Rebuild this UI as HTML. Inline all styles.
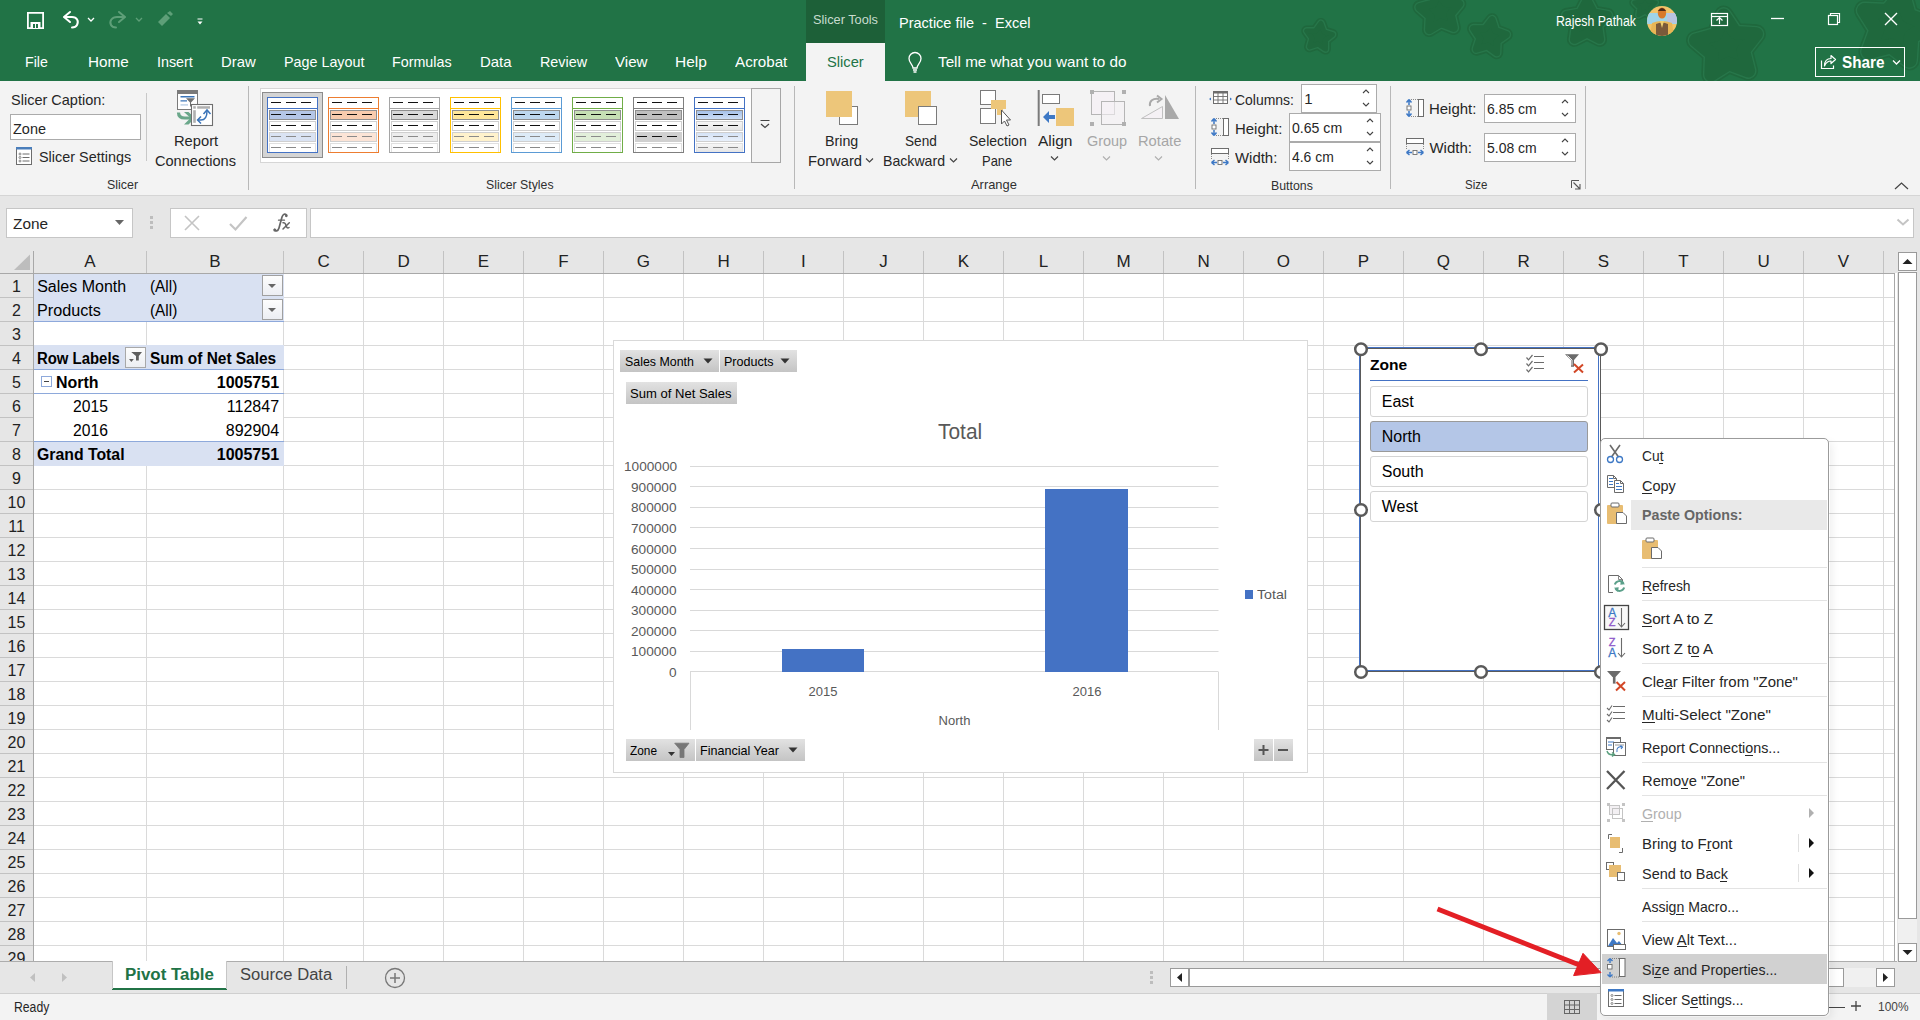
<!DOCTYPE html>
<html><head><meta charset="utf-8"><title>Excel</title>
<style>
html,body{margin:0;padding:0;}
body{width:1920px;height:1020px;position:relative;overflow:hidden;background:#fff;font-family:"Liberation Sans",sans-serif;}
.t{position:absolute;white-space:nowrap;line-height:1;transform-origin:0 0;}
svg{overflow:visible}
</style></head><body>
<div style="position:absolute;left:0px;top:0px;width:1920px;height:81px;background:#217346"></div>
<svg style="position:absolute;left:0px;top:0px;overflow:hidden" width="1920" height="81" viewBox="0 0 1920 81"><path d="M1320.9,23.5 L1323.9,31.9 L1332.4,34.6 L1325.4,40.1 L1325.4,49.0 L1318.0,44.0 L1309.6,46.8 L1312.0,38.2 L1306.8,31.0 L1315.7,30.8Z" fill="#1f683d" stroke="#1f683d" stroke-width="11.1" stroke-linejoin="round"/><path d="M1320.9,23.5 L1323.9,31.9 L1332.4,34.6 L1325.4,40.1 L1325.4,49.0 L1318.0,44.0 L1309.6,46.8 L1312.0,38.2 L1306.8,31.0 L1315.7,30.8Z" fill="#27764a" stroke="#27764a" stroke-width="7.9" stroke-linejoin="round"/><path d="M1320.9,23.5 L1323.9,31.9 L1332.4,34.6 L1325.4,40.1 L1325.4,49.0 L1318.0,44.0 L1309.6,46.8 L1312.0,38.2 L1306.8,31.0 L1315.7,30.8Z" fill="#1f683d" stroke="#1f683d" stroke-width="5.1" stroke-linejoin="round"/><path d="M1438.2,-8.7 L1445.6,2.7 L1459.1,3.9 L1450.5,14.4 L1453.6,27.7 L1440.9,22.8 L1429.3,29.8 L1430.0,16.2 L1419.7,7.3 L1432.9,3.8Z" fill="#1f683d" stroke="#1f683d" stroke-width="14.4" stroke-linejoin="round"/><path d="M1438.2,-8.7 L1445.6,2.7 L1459.1,3.9 L1450.5,14.4 L1453.6,27.7 L1440.9,22.8 L1429.3,29.8 L1430.0,16.2 L1419.7,7.3 L1432.9,3.8Z" fill="#27764a" stroke="#27764a" stroke-width="11.2" stroke-linejoin="round"/><path d="M1438.2,-8.7 L1445.6,2.7 L1459.1,3.9 L1450.5,14.4 L1453.6,27.7 L1440.9,22.8 L1429.3,29.8 L1430.0,16.2 L1419.7,7.3 L1432.9,3.8Z" fill="#1f683d" stroke="#1f683d" stroke-width="8.4" stroke-linejoin="round"/><path d="M1492.1,19.7 L1495.6,30.6 L1506.4,34.6 L1497.1,41.3 L1496.7,52.8 L1487.4,46.0 L1476.3,49.2 L1479.9,38.3 L1473.5,28.7 L1485.0,28.8Z" fill="#1f683d" stroke="#1f683d" stroke-width="12.9" stroke-linejoin="round"/><path d="M1492.1,19.7 L1495.6,30.6 L1506.4,34.6 L1497.1,41.3 L1496.7,52.8 L1487.4,46.0 L1476.3,49.2 L1479.9,38.3 L1473.5,28.7 L1485.0,28.8Z" fill="#27764a" stroke="#27764a" stroke-width="9.7" stroke-linejoin="round"/><path d="M1492.1,19.7 L1495.6,30.6 L1506.4,34.6 L1497.1,41.3 L1496.7,52.8 L1487.4,46.0 L1476.3,49.2 L1479.9,38.3 L1473.5,28.7 L1485.0,28.8Z" fill="#1f683d" stroke="#1f683d" stroke-width="6.9" stroke-linejoin="round"/><path d="M1587.0,0.4 L1593.6,12.9 L1607.5,15.3 L1597.7,25.5 L1599.7,39.5 L1587.0,33.2 L1574.3,39.5 L1576.3,25.5 L1566.5,15.3 L1580.4,12.9Z" fill="#1f683d" stroke="#1f683d" stroke-width="14.7" stroke-linejoin="round"/><path d="M1587.0,0.4 L1593.6,12.9 L1607.5,15.3 L1597.7,25.5 L1599.7,39.5 L1587.0,33.2 L1574.3,39.5 L1576.3,25.5 L1566.5,15.3 L1580.4,12.9Z" fill="#27764a" stroke="#27764a" stroke-width="11.5" stroke-linejoin="round"/><path d="M1587.0,0.4 L1593.6,12.9 L1607.5,15.3 L1597.7,25.5 L1599.7,39.5 L1587.0,33.2 L1574.3,39.5 L1576.3,25.5 L1566.5,15.3 L1580.4,12.9Z" fill="#1f683d" stroke="#1f683d" stroke-width="8.7" stroke-linejoin="round"/><path d="M1645.0,-5.2 L1648.4,1.3 L1655.7,2.5 L1650.5,7.8 L1651.6,15.1 L1645.0,11.8 L1638.4,15.1 L1639.5,7.8 L1634.3,2.5 L1641.6,1.3Z" fill="#1f683d" stroke="#1f683d" stroke-width="10.0" stroke-linejoin="round"/><path d="M1645.0,-5.2 L1648.4,1.3 L1655.7,2.5 L1650.5,7.8 L1651.6,15.1 L1645.0,11.8 L1638.4,15.1 L1639.5,7.8 L1634.3,2.5 L1641.6,1.3Z" fill="#27764a" stroke="#27764a" stroke-width="6.8" stroke-linejoin="round"/><path d="M1645.0,-5.2 L1648.4,1.3 L1655.7,2.5 L1650.5,7.8 L1651.6,15.1 L1645.0,11.8 L1638.4,15.1 L1639.5,7.8 L1634.3,2.5 L1641.6,1.3Z" fill="#1f683d" stroke="#1f683d" stroke-width="4.0" stroke-linejoin="round"/><path d="M1723.7,15.2 L1735.3,32.6 L1756.2,34.0 L1743.3,50.5 L1748.4,70.8 L1728.7,63.5 L1711.0,74.7 L1711.8,53.8 L1695.7,40.3 L1715.9,34.6Z" fill="#1f683d" stroke="#1f683d" stroke-width="19.4" stroke-linejoin="round"/><path d="M1723.7,15.2 L1735.3,32.6 L1756.2,34.0 L1743.3,50.5 L1748.4,70.8 L1728.7,63.5 L1711.0,74.7 L1711.8,53.8 L1695.7,40.3 L1715.9,34.6Z" fill="#27764a" stroke="#27764a" stroke-width="16.2" stroke-linejoin="round"/><path d="M1723.7,15.2 L1735.3,32.6 L1756.2,34.0 L1743.3,50.5 L1748.4,70.8 L1728.7,63.5 L1711.0,74.7 L1711.8,53.8 L1695.7,40.3 L1715.9,34.6Z" fill="#1f683d" stroke="#1f683d" stroke-width="13.4" stroke-linejoin="round"/><path d="M1902.3,-6.4 L1908.6,15.8 L1930.0,24.3 L1910.9,37.2 L1909.3,60.2 L1891.2,45.9 L1868.8,51.6 L1876.8,29.9 L1864.5,10.4 L1887.6,11.3Z" fill="#1f683d" stroke="#1f683d" stroke-width="20.8" stroke-linejoin="round"/><path d="M1902.3,-6.4 L1908.6,15.8 L1930.0,24.3 L1910.9,37.2 L1909.3,60.2 L1891.2,45.9 L1868.8,51.6 L1876.8,29.9 L1864.5,10.4 L1887.6,11.3Z" fill="#27764a" stroke="#27764a" stroke-width="17.6" stroke-linejoin="round"/><path d="M1902.3,-6.4 L1908.6,15.8 L1930.0,24.3 L1910.9,37.2 L1909.3,60.2 L1891.2,45.9 L1868.8,51.6 L1876.8,29.9 L1864.5,10.4 L1887.6,11.3Z" fill="#1f683d" stroke="#1f683d" stroke-width="14.8" stroke-linejoin="round"/></svg>
<div style="position:absolute;left:806px;top:0px;width:79px;height:43px;background:#1d6038"></div>
<div style="position:absolute;left:806px;top:43px;width:79px;height:38px;background:#f3f3f3"></div>
<div class="t" style="left:813.00px;top:13.20px;font-size:13px;color:#c8dccf;transform:scaleX(0.9814);">Slicer Tools</div>
<div class="t" style="left:898.50px;top:14.50px;font-size:15px;color:#ffffff;transform:scaleX(0.9676);">Practice file  -  Excel</div>
<svg style="position:absolute;left:0px;top:0px;" width="260" height="40" viewBox="0 0 260 40"><path d="M27.9,12.9 h15.2 v15.2 h-15.2 z" fill="none" stroke="#fff" stroke-width="1.8"/><rect x="30.5" y="22" width="10" height="6" fill="#fff"/><rect x="33" y="24" width="2" height="4" fill="#217346"/><rect x="36" y="24" width="2" height="4" fill="#217346"/><path d="M64,17 L70,12 M64,17 L70,22 M64,17 H72 C77,17 79,21 77,25 C76,27 74,27.5 72,27.5" fill="none" stroke="#fff" stroke-width="2" stroke-linecap="round"/><path d="M88,18 L91,21 L94,18" fill="none" stroke="#fff" stroke-width="1.3"/><g opacity="0.45"><path d="M125,17 L119,12 M125,17 L119,22 M125,17 H117 C112,17 109,21 111,25 C112,27 114,27.5 116,27.5" fill="none" stroke="#a8d5b5" stroke-width="2" stroke-linecap="round"/><path d="M136,18 L139,21 L142,18" fill="none" stroke="#a8d5b5" stroke-width="1.3"/><path d="M158,22 L166,14 L170,18 L162,26 Z M167,13 L170,11 L173,14 L171,16 Z" fill="#a8d5b5"/></g><path d="M197.5,19 h5" stroke="#fff" stroke-width="1"/><path d="M197.5,21.5 L200,24.5 L202.5,21.5 Z" fill="#fff"/></svg>
<div class="t" style="left:25.20px;top:54.30px;font-size:15px;color:#ffffff;transform:scaleX(0.9441);">File</div>
<div class="t" style="left:88.00px;top:54.30px;font-size:15px;color:#ffffff;transform:scaleX(1.0162);">Home</div>
<div class="t" style="left:157.00px;top:54.30px;font-size:15px;color:#ffffff;transform:scaleX(0.9547);">Insert</div>
<div class="t" style="left:221.30px;top:54.30px;font-size:15px;color:#ffffff;transform:scaleX(0.9907);">Draw</div>
<div class="t" style="left:283.90px;top:54.30px;font-size:15px;color:#ffffff;transform:scaleX(0.9546);">Page Layout</div>
<div class="t" style="left:392.20px;top:54.30px;font-size:15px;color:#ffffff;transform:scaleX(0.9528);">Formulas</div>
<div class="t" style="left:480.00px;top:54.30px;font-size:15px;color:#ffffff;transform:scaleX(0.9961);">Data</div>
<div class="t" style="left:539.80px;top:54.30px;font-size:15px;color:#ffffff;transform:scaleX(0.9573);">Review</div>
<div class="t" style="left:614.80px;top:54.30px;font-size:15px;color:#ffffff;transform:scaleX(1.0078);">View</div>
<div class="t" style="left:674.80px;top:54.30px;font-size:15px;color:#ffffff;transform:scaleX(1.0316);">Help</div>
<div class="t" style="left:735.20px;top:54.30px;font-size:15px;color:#ffffff;transform:scaleX(1.0121);">Acrobat</div>
<div class="t" style="left:826.60px;top:54.30px;font-size:15px;color:#217346;transform:scaleX(0.9787);">Slicer</div>
<svg style="position:absolute;left:900px;top:48px;" width="30" height="30" viewBox="0 0 30 30"><path d="M13,20 C13,17 9,15 9,10.5 A6,6 0 0 1 21,10.5 C21,15 17,17 17,20 Z" fill="none" stroke="#fff" stroke-width="1.3"/><path d="M13,22 h4 M13.5,24 h3" stroke="#fff" stroke-width="1.3"/></svg>
<div class="t" style="left:937.60px;top:54.30px;font-size:15px;color:#ffffff;transform:scaleX(1.0178);">Tell me what you want to do</div>
<div class="t" style="left:1556.00px;top:14.15px;font-size:14px;color:#ffffff;transform:scaleX(0.8778);">Rajesh Pathak</div>
<svg style="position:absolute;left:1647px;top:6px;" width="30" height="30" viewBox="0 0 30 30"><defs><clipPath id="av"><circle cx="15" cy="15" r="15"/></clipPath></defs><g clip-path="url(#av)"><rect width="30" height="30" fill="#f2c46a"/><rect x="0" y="7" width="30" height="11" fill="#9fd3e8"/><rect x="20" y="7" width="10" height="10" fill="#b9c3e0"/><path d="M3,30 L5,17 Q15,13 25,17 L27,30 Z" fill="#e8b655"/><path d="M9,30 L9,18 Q15,15 21,18 L21,30 Z" fill="#7a5a3a"/><path d="M13,15 L15,22 L17,15 Z" fill="#f0d070"/><ellipse cx="15" cy="7" rx="4.2" ry="5.5" fill="#d8782a"/><path d="M10.8,5 Q15,-1 19.2,5" fill="#4a2a1a"/></g></svg>
<svg style="position:absolute;left:0px;top:0px;" width="1920" height="40" viewBox="0 0 1920 40"><rect x="1711.5" y="13.5" width="16" height="12" fill="none" stroke="#fff" stroke-width="1.2"/><path d="M1712,16.5 h15" stroke="#fff" stroke-width="1.2"/><path d="M1719.5,24 v-6 M1716.5,20.5 L1719.5,17.5 L1722.5,20.5" fill="none" stroke="#fff" stroke-width="1.2"/><path d="M1771,18.5 h13" stroke="#fff" stroke-width="1.3"/><rect x="1828.5" y="15.5" width="9" height="9" fill="none" stroke="#fff" stroke-width="1.2"/><path d="M1830.5,15.5 v-2 h9 v9 h-2" fill="none" stroke="#fff" stroke-width="1.2"/><path d="M1885,13 L1897,25 M1897,13 L1885,25" stroke="#fff" stroke-width="1.4"/></svg>
<div style="position:absolute;left:1815px;top:47px;width:90px;height:30px;box-sizing:border-box;border:1px solid #fff;"></div>
<svg style="position:absolute;left:1818px;top:51px;" width="22" height="20" viewBox="0 0 22 20"><path d="M3.5,9.5 v8 h12 v-3" fill="none" stroke="#fff" stroke-width="1.2"/><path d="M6.5,15 C6.5,10 9,7.5 13,7.5 V4.5 L17.5,8.5 L13,12.5 V10 C10,10 8,11.5 6.5,15 Z" fill="none" stroke="#fff" stroke-width="1.2" stroke-linejoin="round"/></svg>
<div class="t" style="left:1841.50px;top:54.76px;font-size:16px;color:#ffffff;font-weight:bold;transform:scaleX(0.9555);">Share</div>
<svg style="position:absolute;left:1892px;top:59px;" width="10" height="8" viewBox="0 0 10 8"><path d="M1,1.5 L4.5,5 L8,1.5" fill="none" stroke="#fff" stroke-width="1.3"/></svg>
<div style="position:absolute;left:0px;top:81px;width:1920px;height:114px;background:#f3f3f3"></div>
<div style="position:absolute;left:0px;top:195px;width:1920px;height:1px;background:#d5d5d5"></div>
<div style="position:absolute;left:146px;top:93px;width:1px;height:68px;background:#c8c8c8"></div>
<div style="position:absolute;left:248px;top:86px;width:1px;height:104px;background:#b8b8b8"></div>
<div style="position:absolute;left:794px;top:86px;width:1px;height:103px;background:#b8b8b8"></div>
<div style="position:absolute;left:1195px;top:86px;width:1px;height:103px;background:#b8b8b8"></div>
<div style="position:absolute;left:1390px;top:86px;width:1px;height:103px;background:#b8b8b8"></div>
<div style="position:absolute;left:1585px;top:86px;width:1px;height:103px;background:#b8b8b8"></div>
<div class="t" style="left:10.60px;top:91.70px;font-size:15px;color:#262626;transform:scaleX(0.9675);">Slicer Caption:</div>
<div style="position:absolute;left:10px;top:114px;width:131px;height:26px;box-sizing:border-box;border:1px solid #ababab;background:#fff"></div>
<div class="t" style="left:13.00px;top:120.80px;font-size:15px;color:#262626;transform:scaleX(0.9649);">Zone</div>
<svg style="position:absolute;left:15px;top:146px;" width="18" height="20" viewBox="0 0 18 20"><rect x="1.5" y="1.5" width="15" height="17" fill="#fff" stroke="#6d6d6d"/><rect x="1" y="1" width="16" height="2.5" fill="#4a7ebb"/><circle cx="5" cy="8" r="1" fill="none" stroke="#6d6d6d" stroke-width="0.8"/><circle cx="5" cy="11.5" r="1" fill="none" stroke="#6d6d6d" stroke-width="0.8"/><circle cx="5" cy="15" r="1" fill="none" stroke="#6d6d6d" stroke-width="0.8"/><path d="M7.5,8 h7 M7.5,11.5 h7 M7.5,15 h7" stroke="#6d6d6d" stroke-width="1"/></svg>
<div class="t" style="left:38.60px;top:149.30px;font-size:15px;color:#262626;transform:scaleX(0.9609);">Slicer Settings</div>
<svg style="position:absolute;left:170px;top:85px;" width="50" height="45" viewBox="0 0 50 45"><rect x="7.5" y="5.5" width="20" height="19" fill="#fff" stroke="#7a7a7a"/><rect x="7" y="5" width="21" height="4" fill="#7a7a7a"/>
<path d="M10.5,11.7 h14 M10.5,15.9 h6.5" stroke="#3a74b8" stroke-width="1.4"/><path d="M10.5,19.9 h7.5" stroke="#b9cfe6" stroke-width="1.4"/><path d="M16,13.2 h9 l-4,4.4 v3.8 h-1 v-3.8 z" fill="#707070"/>
<path d="M8.5,27.5 C8.5,31.5 11,33 15,33 H21" fill="none" stroke="#6aa78a" stroke-width="3.2"/><path d="M14,27 L18.5,27 L25,33 L18.5,39.5 L14,39.5 L20.5,33 Z" fill="#6aa78a"/><rect x="21.5" y="19.5" width="21" height="21" fill="#fff" stroke="#6f6f6f" stroke-width="1.1"/><rect x="23.2" y="21.2" width="2.6" height="2.5" fill="#b0b0b0"/><rect x="27.2" y="21.2" width="12.8" height="2.5" fill="#b0b0b0"/><rect x="23.2" y="25.2" width="2.6" height="12.6" fill="#b0b0b0"/>
<path d="M27.6,35 H31 C35,35 37,32 37,26" fill="none" stroke="#3a74b8" stroke-width="1.5"/><path d="M33.5,29 L37,25 L40.5,29" fill="none" stroke="#3a74b8" stroke-width="1.5"/><path d="M31,31.5 L27.6,35 L31,38.5" fill="none" stroke="#3a74b8" stroke-width="1.5"/>
</svg>
<div class="t" style="left:173.60px;top:133.30px;font-size:15px;color:#262626;transform:scaleX(0.9800);">Report</div>
<div class="t" style="left:155.00px;top:153.30px;font-size:15px;color:#262626;transform:scaleX(0.9712);">Connections</div>
<div class="t" style="left:107.00px;top:178.27px;font-size:13.5px;color:#303030;transform:scaleX(0.9185);">Slicer</div>
<div style="position:absolute;left:260px;top:88px;width:521px;height:75px;box-sizing:border-box;border:1px solid #d6d6d6;background:#fff"></div>
<div style="position:absolute;left:751px;top:88px;width:30px;height:75px;box-sizing:border-box;border:1px solid #a6a6a6;background:#f3f3f3"></div>
<svg style="position:absolute;left:759px;top:118px;" width="14" height="12" viewBox="0 0 14 12"><path d="M1.5,2.5 h9" stroke="#444" stroke-width="1"/><path d="M2,6 L6,9.5 L10,6" fill="none" stroke="#444" stroke-width="1.2"/></svg>
<div style="position:absolute;left:262px;top:92px;width:61px;height:66px;box-sizing:border-box;border:1px solid #8c8c8c;background:#d4d4d4"></div>
<svg style="position:absolute;left:267px;top:97px;" width="51" height="56" viewBox="0 0 51 56"><rect x="0" y="0" width="51" height="56" fill="#fff"/><path d="M4,5.5 h10 M19,5.5 h10 M34,5.5 h10" stroke="#111" stroke-width="1"/><rect x="2.5" y="13.5" width="46" height="9" fill="#b4c6e7" stroke="#8f8f8f"/><path d="M4,17.5 h10 M19,17.5 h10 M34,17.5 h10" stroke="#111" stroke-width="1"/><rect x="2.5" y="24.5" width="46" height="9" fill="#fff" stroke="#cfcfcf"/><path d="M4,28.5 h10 M19,28.5 h10 M34,28.5 h10" stroke="#111" stroke-width="1"/><rect x="2.5" y="35.5" width="46" height="9" fill="#dae3f3" stroke="#cfcfcf"/><path d="M4,39.5 h10 M19,39.5 h10 M34,39.5 h10" stroke="#8a8a8a" stroke-width="1"/><rect x="2.5" y="46.5" width="46" height="9" fill="#fff" stroke="#e0e0e0"/><path d="M4,50.5 h10 M19,50.5 h10 M34,50.5 h10" stroke="#8a8a8a" stroke-width="1"/><path d="M0.5,11.5 h50" stroke="#4472c4"/><rect x="0.5" y="0.5" width="50" height="55" fill="none" stroke="#4472c4"/></svg>
<svg style="position:absolute;left:328px;top:97px;" width="51" height="56" viewBox="0 0 51 56"><rect x="0" y="0" width="51" height="56" fill="#fff"/><path d="M4,5.5 h10 M19,5.5 h10 M34,5.5 h10" stroke="#111" stroke-width="1"/><rect x="2.5" y="13.5" width="46" height="9" fill="#f8cbad" stroke="#8f8f8f"/><path d="M4,17.5 h10 M19,17.5 h10 M34,17.5 h10" stroke="#111" stroke-width="1"/><rect x="2.5" y="24.5" width="46" height="9" fill="#fff" stroke="#cfcfcf"/><path d="M4,28.5 h10 M19,28.5 h10 M34,28.5 h10" stroke="#111" stroke-width="1"/><rect x="2.5" y="35.5" width="46" height="9" fill="#fce4d6" stroke="#cfcfcf"/><path d="M4,39.5 h10 M19,39.5 h10 M34,39.5 h10" stroke="#8a8a8a" stroke-width="1"/><rect x="2.5" y="46.5" width="46" height="9" fill="#fff" stroke="#e0e0e0"/><path d="M4,50.5 h10 M19,50.5 h10 M34,50.5 h10" stroke="#8a8a8a" stroke-width="1"/><path d="M0.5,11.5 h50" stroke="#ed7d31"/><rect x="0.5" y="0.5" width="50" height="55" fill="none" stroke="#ed7d31"/></svg>
<svg style="position:absolute;left:389px;top:97px;" width="51" height="56" viewBox="0 0 51 56"><rect x="0" y="0" width="51" height="56" fill="#fff"/><path d="M4,5.5 h10 M19,5.5 h10 M34,5.5 h10" stroke="#111" stroke-width="1"/><rect x="2.5" y="13.5" width="46" height="9" fill="#d9d9d9" stroke="#8f8f8f"/><path d="M4,17.5 h10 M19,17.5 h10 M34,17.5 h10" stroke="#111" stroke-width="1"/><rect x="2.5" y="24.5" width="46" height="9" fill="#fff" stroke="#cfcfcf"/><path d="M4,28.5 h10 M19,28.5 h10 M34,28.5 h10" stroke="#111" stroke-width="1"/><rect x="2.5" y="35.5" width="46" height="9" fill="#ededed" stroke="#cfcfcf"/><path d="M4,39.5 h10 M19,39.5 h10 M34,39.5 h10" stroke="#8a8a8a" stroke-width="1"/><rect x="2.5" y="46.5" width="46" height="9" fill="#fff" stroke="#e0e0e0"/><path d="M4,50.5 h10 M19,50.5 h10 M34,50.5 h10" stroke="#8a8a8a" stroke-width="1"/><path d="M0.5,11.5 h50" stroke="#a5a5a5"/><rect x="0.5" y="0.5" width="50" height="55" fill="none" stroke="#a5a5a5"/></svg>
<svg style="position:absolute;left:450px;top:97px;" width="51" height="56" viewBox="0 0 51 56"><rect x="0" y="0" width="51" height="56" fill="#fff"/><path d="M4,5.5 h10 M19,5.5 h10 M34,5.5 h10" stroke="#111" stroke-width="1"/><rect x="2.5" y="13.5" width="46" height="9" fill="#ffe699" stroke="#8f8f8f"/><path d="M4,17.5 h10 M19,17.5 h10 M34,17.5 h10" stroke="#111" stroke-width="1"/><rect x="2.5" y="24.5" width="46" height="9" fill="#fff" stroke="#cfcfcf"/><path d="M4,28.5 h10 M19,28.5 h10 M34,28.5 h10" stroke="#111" stroke-width="1"/><rect x="2.5" y="35.5" width="46" height="9" fill="#fff2cc" stroke="#cfcfcf"/><path d="M4,39.5 h10 M19,39.5 h10 M34,39.5 h10" stroke="#8a8a8a" stroke-width="1"/><rect x="2.5" y="46.5" width="46" height="9" fill="#fff" stroke="#e0e0e0"/><path d="M4,50.5 h10 M19,50.5 h10 M34,50.5 h10" stroke="#8a8a8a" stroke-width="1"/><path d="M0.5,11.5 h50" stroke="#ffc000"/><rect x="0.5" y="0.5" width="50" height="55" fill="none" stroke="#ffc000"/></svg>
<svg style="position:absolute;left:511px;top:97px;" width="51" height="56" viewBox="0 0 51 56"><rect x="0" y="0" width="51" height="56" fill="#fff"/><path d="M4,5.5 h10 M19,5.5 h10 M34,5.5 h10" stroke="#111" stroke-width="1"/><rect x="2.5" y="13.5" width="46" height="9" fill="#bdd7ee" stroke="#8f8f8f"/><path d="M4,17.5 h10 M19,17.5 h10 M34,17.5 h10" stroke="#111" stroke-width="1"/><rect x="2.5" y="24.5" width="46" height="9" fill="#fff" stroke="#cfcfcf"/><path d="M4,28.5 h10 M19,28.5 h10 M34,28.5 h10" stroke="#111" stroke-width="1"/><rect x="2.5" y="35.5" width="46" height="9" fill="#ddebf7" stroke="#cfcfcf"/><path d="M4,39.5 h10 M19,39.5 h10 M34,39.5 h10" stroke="#8a8a8a" stroke-width="1"/><rect x="2.5" y="46.5" width="46" height="9" fill="#fff" stroke="#e0e0e0"/><path d="M4,50.5 h10 M19,50.5 h10 M34,50.5 h10" stroke="#8a8a8a" stroke-width="1"/><path d="M0.5,11.5 h50" stroke="#5b9bd5"/><rect x="0.5" y="0.5" width="50" height="55" fill="none" stroke="#5b9bd5"/></svg>
<svg style="position:absolute;left:572px;top:97px;" width="51" height="56" viewBox="0 0 51 56"><rect x="0" y="0" width="51" height="56" fill="#fff"/><path d="M4,5.5 h10 M19,5.5 h10 M34,5.5 h10" stroke="#111" stroke-width="1"/><rect x="2.5" y="13.5" width="46" height="9" fill="#c6e0b4" stroke="#8f8f8f"/><path d="M4,17.5 h10 M19,17.5 h10 M34,17.5 h10" stroke="#111" stroke-width="1"/><rect x="2.5" y="24.5" width="46" height="9" fill="#fff" stroke="#cfcfcf"/><path d="M4,28.5 h10 M19,28.5 h10 M34,28.5 h10" stroke="#111" stroke-width="1"/><rect x="2.5" y="35.5" width="46" height="9" fill="#e2efda" stroke="#cfcfcf"/><path d="M4,39.5 h10 M19,39.5 h10 M34,39.5 h10" stroke="#8a8a8a" stroke-width="1"/><rect x="2.5" y="46.5" width="46" height="9" fill="#fff" stroke="#e0e0e0"/><path d="M4,50.5 h10 M19,50.5 h10 M34,50.5 h10" stroke="#8a8a8a" stroke-width="1"/><path d="M0.5,11.5 h50" stroke="#70ad47"/><rect x="0.5" y="0.5" width="50" height="55" fill="none" stroke="#70ad47"/></svg>
<svg style="position:absolute;left:633px;top:97px;" width="51" height="56" viewBox="0 0 51 56"><rect x="0" y="0" width="51" height="56" fill="#fff"/><path d="M4,5.5 h10 M19,5.5 h10 M34,5.5 h10" stroke="#111" stroke-width="1"/><rect x="2.5" y="13.5" width="46" height="9" fill="#bfbfbf" stroke="#8f8f8f"/><path d="M4,17.5 h10 M19,17.5 h10 M34,17.5 h10" stroke="#111" stroke-width="1"/><rect x="2.5" y="24.5" width="46" height="9" fill="#fff" stroke="#cfcfcf"/><path d="M4,28.5 h10 M19,28.5 h10 M34,28.5 h10" stroke="#111" stroke-width="1"/><rect x="2.5" y="35.5" width="46" height="9" fill="#d0d0d0" stroke="#cfcfcf"/><path d="M4,39.5 h10 M19,39.5 h10 M34,39.5 h10" stroke="#111" stroke-width="1"/><rect x="2.5" y="46.5" width="46" height="9" fill="#fff" stroke="#e0e0e0"/><path d="M4,50.5 h10 M19,50.5 h10 M34,50.5 h10" stroke="#8a8a8a" stroke-width="1"/><path d="M0.5,11.5 h50" stroke="#7f7f7f"/><rect x="0.5" y="0.5" width="50" height="55" fill="none" stroke="#7f7f7f"/></svg>
<svg style="position:absolute;left:694px;top:97px;" width="51" height="56" viewBox="0 0 51 56"><defs><linearGradient id="g8a" x1="0" y1="0" x2="0" y2="1"><stop offset="0" stop-color="#a3bfe8"/><stop offset="1" stop-color="#cfe0f7"/></linearGradient><linearGradient id="g8b" x1="0" y1="0" x2="0" y2="1"><stop offset="0" stop-color="#f7f7f7"/><stop offset="1" stop-color="#e4e4e4"/></linearGradient><linearGradient id="g8c" x1="0" y1="0" x2="0" y2="1"><stop offset="0" stop-color="#d3e2f6"/><stop offset="1" stop-color="#eaf1fb"/></linearGradient></defs><rect x="0" y="0" width="51" height="56" fill="#fff"/><path d="M4,5.5 h10 M19,5.5 h10 M34,5.5 h10" stroke="#111" stroke-width="1"/><rect x="2.5" y="13.5" width="46" height="9" fill="url(#g8a)" stroke="#8f8f8f"/><path d="M4,17.5 h10 M19,17.5 h10 M34,17.5 h10" stroke="#111" stroke-width="1"/><rect x="2.5" y="24.5" width="46" height="9" fill="url(#g8b)" stroke="#cfcfcf"/><path d="M4,28.5 h10 M19,28.5 h10 M34,28.5 h10" stroke="#111" stroke-width="1"/><rect x="2.5" y="35.5" width="46" height="9" fill="url(#g8c)" stroke="#cfcfcf"/><path d="M4,39.5 h10 M19,39.5 h10 M34,39.5 h10" stroke="#8a8a8a" stroke-width="1"/><rect x="2.5" y="46.5" width="46" height="9" fill="url(#g8b)" stroke="#e0e0e0"/><path d="M4,50.5 h10 M19,50.5 h10 M34,50.5 h10" stroke="#8a8a8a" stroke-width="1"/><path d="M0.5,11.5 h50" stroke="#4472c4"/><rect x="0.5" y="0.5" width="50" height="55" fill="none" stroke="#4472c4"/></svg>
<div class="t" style="left:486.00px;top:178.27px;font-size:13.5px;color:#303030;transform:scaleX(0.9091);">Slicer Styles</div>
<svg style="position:absolute;left:820px;top:88px;" width="45" height="40" viewBox="0 0 45 40"><rect x="19.5" y="18.5" width="18" height="18" fill="#fff" stroke="#7a7a7a"/><rect x="6" y="3" width="26" height="26" fill="#edc67a"/></svg>
<div class="t" style="left:824.70px;top:133.30px;font-size:15px;color:#262626;transform:scaleX(0.9507);">Bring</div>
<div class="t" style="left:808.00px;top:153.30px;font-size:15px;color:#262626;transform:scaleX(0.9809);">Forward</div>
<svg style="position:absolute;left:865px;top:157px;" width="10" height="8" viewBox="0 0 10 8"><path d="M1,1.5 L4.5,5 L8,1.5" fill="none" stroke="#444" stroke-width="1.2"/></svg>
<svg style="position:absolute;left:900px;top:88px;" width="45" height="40" viewBox="0 0 45 40"><rect x="5" y="3" width="26" height="26" fill="#edc67a"/><rect x="18.5" y="18.5" width="18" height="18" fill="#fff" stroke="#7a7a7a"/></svg>
<div class="t" style="left:904.70px;top:133.30px;font-size:15px;color:#262626;transform:scaleX(0.9079);">Send</div>
<div class="t" style="left:883.00px;top:153.30px;font-size:15px;color:#262626;transform:scaleX(0.9415);">Backward</div>
<svg style="position:absolute;left:949px;top:157px;" width="10" height="8" viewBox="0 0 10 8"><path d="M1,1.5 L4.5,5 L8,1.5" fill="none" stroke="#444" stroke-width="1.2"/></svg>
<svg style="position:absolute;left:975px;top:86px;" width="45" height="42" viewBox="0 0 45 42"><rect x="5.5" y="4.5" width="15" height="14" fill="#fff" stroke="#7a7a7a"/><rect x="5.5" y="22.5" width="15" height="15" fill="#fff" stroke="#7a7a7a"/><path d="M16,14 h15 v9 h-3 v6 h-6 v-6 h-6 z" fill="#edc67a"/><path d="M26.5,24 L26.5,38 L29.5,35 L32,40 L34,39 L31.5,34 L35.5,34 Z" fill="#fff" stroke="#555" stroke-width="1" stroke-linejoin="round"/></svg>
<div class="t" style="left:969.00px;top:133.30px;font-size:15px;color:#262626;transform:scaleX(0.9348);">Selection</div>
<div class="t" style="left:981.50px;top:153.30px;font-size:15px;color:#262626;transform:scaleX(0.8651);">Pane</div>
<svg style="position:absolute;left:1030px;top:86px;" width="50" height="42" viewBox="0 0 50 42"><path d="M8.7,4 v36" stroke="#7a7a7a" stroke-width="2"/><rect x="12.5" y="8.5" width="17" height="9" fill="#fff" stroke="#7a7a7a"/><rect x="26" y="22" width="18" height="18" fill="#edc67a"/><path d="M13,31 L19,25 V29 H25 V33 H19 V37 Z" fill="#3d78c5"/></svg>
<div class="t" style="left:1038.00px;top:133.30px;font-size:15px;color:#262626;transform:scaleX(1.0337);">Align</div>
<svg style="position:absolute;left:1050px;top:155px;" width="10" height="8" viewBox="0 0 10 8"><path d="M1,1.5 L4.5,5 L8,1.5" fill="none" stroke="#444" stroke-width="1.2"/></svg>
<svg style="position:absolute;left:1085px;top:86px;" width="45" height="42" viewBox="0 0 45 42"><rect x="6.5" y="5.5" width="23" height="23" fill="#f5f1f5" stroke="#b5b5b5"/><rect x="16.5" y="15.5" width="23" height="23" fill="#f5f1f5" fill-opacity="0.6" stroke="#b5b5b5"/><rect x="5" y="4" width="4" height="4" fill="#b0b0b0"/><rect x="37" y="4" width="4" height="4" fill="#b0b0b0"/><rect x="5" y="36" width="4" height="4" fill="#b0b0b0"/><rect x="37" y="36" width="4" height="4" fill="#b0b0b0"/></svg>
<div class="t" style="left:1087.40px;top:133.30px;font-size:15px;color:#a6a6a6;transform:scaleX(0.9616);">Group</div>
<svg style="position:absolute;left:1102px;top:155px;" width="10" height="8" viewBox="0 0 10 8"><path d="M1,1.5 L4.5,5 L8,1.5" fill="none" stroke="#b0b0b0" stroke-width="1.2"/></svg>
<svg style="position:absolute;left:1138px;top:86px;" width="45" height="42" viewBox="0 0 45 42"><path d="M3.5,32.5 L24.5,20.5 V32.5 Z" fill="#f5f1f5" stroke="#c0c0c0"/><path d="M27,9 L41,33 H27 Z" fill="#a9a9a9"/><path d="M12,20 C11,15 15,12 21,13" fill="none" stroke="#a9a9a9" stroke-width="2"/><path d="M19,9.5 L23.5,13 L19,16.5" fill="none" stroke="#a9a9a9" stroke-width="2"/></svg>
<div class="t" style="left:1138.40px;top:133.30px;font-size:15px;color:#a6a6a6;transform:scaleX(0.9802);">Rotate</div>
<svg style="position:absolute;left:1154px;top:155px;" width="10" height="8" viewBox="0 0 10 8"><path d="M1,1.5 L4.5,5 L8,1.5" fill="none" stroke="#b0b0b0" stroke-width="1.2"/></svg>
<div class="t" style="left:970.50px;top:177.57px;font-size:13.5px;color:#303030;transform:scaleX(0.9551);">Arrange</div>
<svg style="position:absolute;left:1208px;top:90px;" width="24" height="16" viewBox="0 0 24 16"><rect x="5.5" y="1.5" width="14" height="12" fill="#fff" stroke="#6d6d6d"/><rect x="5" y="1" width="15" height="2.5" fill="#6d6d6d"/><path d="M5.5,6.5 h14 M5.5,10 h14 M10,3 v10 M15,3 v10" stroke="#6d6d6d" stroke-width="0.9"/><path d="M3,7.5 L1,9 L3,10.5 Z M22,7.5 L24,9 L22,10.5 Z" fill="#3d78c5"/></svg>
<div class="t" style="left:1234.50px;top:91.80px;font-size:15px;color:#262626;transform:scaleX(0.9310);">Columns:</div>
<div style="position:absolute;left:1301px;top:84px;width:76px;height:29px;box-sizing:border-box;border:1px solid #ababab;background:#fff"></div>
<div class="t" style="left:1304.30px;top:91.30px;font-size:15px;color:#262626;">1</div>
<svg style="position:absolute;left:1361px;top:87px;" width="10" height="22" viewBox="0 0 10 22"><path d="M2,6 L5,3 L8,6" fill="none" stroke="#444" stroke-width="1.1"/><path d="M2,16 L5,19 L8,16" fill="none" stroke="#444" stroke-width="1.1"/></svg>
<svg style="position:absolute;left:1210px;top:117px;" width="20" height="20" viewBox="0 0 20 20"><path d="M4,1.5 L1.5,4.5 M4,1.5 L6.5,4.5 M4,1.5 V7 M4,18.5 L1.5,15.5 M4,18.5 L6.5,15.5 M4,18.5 V13" stroke="#3d78c5" stroke-width="1.5" fill="none"/><rect x="2" y="8" width="4" height="4" fill="#fff" stroke="#6d6d6d" stroke-width="0.9"/><path d="M6,1.5 h7 M6,18.5 h7" stroke="#6d6d6d" stroke-width="0.8" stroke-dasharray="1,1"/><rect x="13.5" y="1.5" width="5" height="17" fill="#fff" stroke="#6d6d6d"/></svg>
<div class="t" style="left:1234.50px;top:120.80px;font-size:15px;color:#262626;transform:scaleX(0.9947);">Height:</div>
<div style="position:absolute;left:1289px;top:113px;width:92px;height:29px;box-sizing:border-box;border:1px solid #ababab;background:#fff"></div>
<div class="t" style="left:1292.30px;top:120.30px;font-size:15px;color:#262626;transform:scaleX(0.9395);">0.65 cm</div>
<svg style="position:absolute;left:1365px;top:116px;" width="10" height="22" viewBox="0 0 10 22"><path d="M2,6 L5,3 L8,6" fill="none" stroke="#444" stroke-width="1.1"/><path d="M2,16 L5,19 L8,16" fill="none" stroke="#444" stroke-width="1.1"/></svg>
<svg style="position:absolute;left:1210px;top:147px;" width="20" height="20" viewBox="0 0 20 20"><rect x="1.5" y="1.5" width="17" height="5" fill="#fff" stroke="#6d6d6d"/><path d="M1.5,7 v6 M18.5,7 v6" stroke="#6d6d6d" stroke-width="0.8" stroke-dasharray="1,1"/><path d="M1.5,15.5 L4.5,13 M1.5,15.5 L4.5,18 M1.5,15.5 H7 M18.5,15.5 L15.5,13 M18.5,15.5 L15.5,18 M18.5,15.5 H13" stroke="#3d78c5" stroke-width="1.5" fill="none"/><rect x="8" y="13.5" width="4" height="4" fill="#fff" stroke="#6d6d6d" stroke-width="0.9"/></svg>
<div class="t" style="left:1234.50px;top:149.80px;font-size:15px;color:#262626;transform:scaleX(0.9947);">Width:</div>
<div style="position:absolute;left:1289px;top:142px;width:92px;height:29px;box-sizing:border-box;border:1px solid #ababab;background:#fff"></div>
<div class="t" style="left:1292.30px;top:149.30px;font-size:15px;color:#262626;transform:scaleX(0.9267);">4.6 cm</div>
<svg style="position:absolute;left:1365px;top:145px;" width="10" height="22" viewBox="0 0 10 22"><path d="M2,6 L5,3 L8,6" fill="none" stroke="#444" stroke-width="1.1"/><path d="M2,16 L5,19 L8,16" fill="none" stroke="#444" stroke-width="1.1"/></svg>
<div class="t" style="left:1270.60px;top:178.57px;font-size:13.5px;color:#303030;transform:scaleX(0.9134);">Buttons</div>
<svg style="position:absolute;left:1405px;top:98px;" width="20" height="20" viewBox="0 0 20 20"><path d="M4,1.5 L1.5,4.5 M4,1.5 L6.5,4.5 M4,1.5 V7 M4,18.5 L1.5,15.5 M4,18.5 L6.5,15.5 M4,18.5 V13" stroke="#3d78c5" stroke-width="1.5" fill="none"/><rect x="2" y="8" width="4" height="4" fill="#fff" stroke="#6d6d6d" stroke-width="0.9"/><path d="M6,1.5 h7 M6,18.5 h7" stroke="#6d6d6d" stroke-width="0.8" stroke-dasharray="1,1"/><rect x="13.5" y="1.5" width="5" height="17" fill="#fff" stroke="#6d6d6d"/></svg>
<div class="t" style="left:1429.40px;top:101.30px;font-size:15px;color:#262626;transform:scaleX(0.9968);">Height:</div>
<div style="position:absolute;left:1484px;top:94px;width:92px;height:29px;box-sizing:border-box;border:1px solid #ababab;background:#fff"></div>
<div class="t" style="left:1487.30px;top:101.30px;font-size:15px;color:#262626;transform:scaleX(0.9320);">6.85 cm</div>
<svg style="position:absolute;left:1560px;top:97px;" width="10" height="22" viewBox="0 0 10 22"><path d="M2,6 L5,3 L8,6" fill="none" stroke="#444" stroke-width="1.1"/><path d="M2,16 L5,19 L8,16" fill="none" stroke="#444" stroke-width="1.1"/></svg>
<svg style="position:absolute;left:1405px;top:137px;" width="20" height="20" viewBox="0 0 20 20"><rect x="1.5" y="1.5" width="17" height="5" fill="#fff" stroke="#6d6d6d"/><path d="M1.5,7 v6 M18.5,7 v6" stroke="#6d6d6d" stroke-width="0.8" stroke-dasharray="1,1"/><path d="M1.5,15.5 L4.5,13 M1.5,15.5 L4.5,18 M1.5,15.5 H7 M18.5,15.5 L15.5,13 M18.5,15.5 L15.5,18 M18.5,15.5 H13" stroke="#3d78c5" stroke-width="1.5" fill="none"/><rect x="8" y="13.5" width="4" height="4" fill="#fff" stroke="#6d6d6d" stroke-width="0.9"/></svg>
<div class="t" style="left:1429.40px;top:140.30px;font-size:15px;color:#262626;">Width:</div>
<div style="position:absolute;left:1484px;top:133px;width:92px;height:29px;box-sizing:border-box;border:1px solid #ababab;background:#fff"></div>
<div class="t" style="left:1487.30px;top:140.30px;font-size:15px;color:#262626;transform:scaleX(0.9320);">5.08 cm</div>
<svg style="position:absolute;left:1560px;top:136px;" width="10" height="22" viewBox="0 0 10 22"><path d="M2,6 L5,3 L8,6" fill="none" stroke="#444" stroke-width="1.1"/><path d="M2,16 L5,19 L8,16" fill="none" stroke="#444" stroke-width="1.1"/></svg>
<div class="t" style="left:1465.00px;top:178.17px;font-size:13.5px;color:#303030;transform:scaleX(0.8531);">Size</div>
<svg style="position:absolute;left:1570px;top:179px;" width="12" height="12" viewBox="0 0 12 12"><path d="M1.5,9 V1.5 H9" fill="none" stroke="#555" stroke-width="1"/><path d="M3.5,3.5 L10,10 M10,5 V10 H5" fill="none" stroke="#555" stroke-width="1.1"/></svg>
<svg style="position:absolute;left:1892px;top:180px;" width="22" height="12" viewBox="0 0 22 12"><path d="M3,9 L9.5,3 L16,9" fill="none" stroke="#444" stroke-width="1.2"/></svg>
<div style="position:absolute;left:0px;top:196px;width:1920px;height:54px;background:#e6e6e6"></div>
<div style="position:absolute;left:6px;top:208px;width:127px;height:30px;box-sizing:border-box;border:1px solid #c6c6c6;background:#fff"></div>
<div class="t" style="left:13.00px;top:216.30px;font-size:15px;color:#262626;transform:scaleX(1.0234);">Zone</div>
<svg style="position:absolute;left:114px;top:219px;" width="12" height="8" viewBox="0 0 12 8"><path d="M1,1 H10 L5.5,6 Z" fill="#666"/></svg>
<div style="position:absolute;left:150px;top:216px;width:3px;height:3px;background:#bdbdbd"></div>
<div style="position:absolute;left:150px;top:221px;width:3px;height:3px;background:#bdbdbd"></div>
<div style="position:absolute;left:150px;top:226px;width:3px;height:3px;background:#bdbdbd"></div>
<div style="position:absolute;left:170px;top:208px;width:137px;height:30px;box-sizing:border-box;border:1px solid #c6c6c6;background:#fff"></div>
<svg style="position:absolute;left:183px;top:214px;" width="20" height="18" viewBox="0 0 20 18"><path d="M2,2 L16,16 M16,2 L2,16" stroke="#c4c4c4" stroke-width="1.6"/></svg>
<svg style="position:absolute;left:228px;top:214px;" width="22" height="18" viewBox="0 0 22 18"><path d="M2,10 L7.5,15.5 L18.5,3" fill="none" stroke="#c4c4c4" stroke-width="2.2"/></svg>
<svg style="position:absolute;left:265px;top:205px;" width="30" height="30" viewBox="0 0 30 30"><g fill="none" stroke="#666" stroke-linecap="round"><path d="M9.5,24.5 C10.5,26.5 13,26.5 14,23 L17,12 C18,9 20,8.5 21.5,10" stroke-width="1.7"/><path d="M13.5,15.2 H19.5" stroke-width="1.3"/><path d="M18,17.8 C19.5,17.2 20.5,18.5 21,20.5 C21.5,22.5 22.5,23.5 24,22.5" stroke-width="1.5"/><path d="M24.3,17.8 L18,24" stroke-width="1.5"/></g><circle cx="9.8" cy="25" r="1.5" fill="#666"/><circle cx="21.3" cy="10.8" r="1.4" fill="#666"/></svg>
<div style="position:absolute;left:310px;top:208px;width:1604px;height:30px;box-sizing:border-box;border:1px solid #c6c6c6;background:#fff"></div>
<svg style="position:absolute;left:1896px;top:218px;" width="16" height="10" viewBox="0 0 16 10"><path d="M1.5,1.5 L7,6.5 L12.5,1.5" fill="none" stroke="#c4c4c4" stroke-width="2"/></svg>
<div style="position:absolute;left:0px;top:250px;width:1897px;height:23px;background:#e6e6e6"></div>
<div style="position:absolute;left:0px;top:273px;width:33px;height:688px;background:#e6e6e6"></div>
<div style="position:absolute;left:33px;top:273px;width:1861px;height:688px;background:#fff"></div>
<svg style="position:absolute;left:0px;top:0px;pointer-events:none" width="1920" height="1020" viewBox="0 0 1920 1020"><path d="M146.5,273 V961" stroke="#dadada"/><path d="M283.5,273 V961" stroke="#dadada"/><path d="M363.5,273 V961" stroke="#dadada"/><path d="M443.5,273 V961" stroke="#dadada"/><path d="M523.5,273 V961" stroke="#dadada"/><path d="M603.5,273 V961" stroke="#dadada"/><path d="M683.5,273 V961" stroke="#dadada"/><path d="M763.5,273 V961" stroke="#dadada"/><path d="M843.5,273 V961" stroke="#dadada"/><path d="M923.5,273 V961" stroke="#dadada"/><path d="M1003.5,273 V961" stroke="#dadada"/><path d="M1083.5,273 V961" stroke="#dadada"/><path d="M1163.5,273 V961" stroke="#dadada"/><path d="M1243.5,273 V961" stroke="#dadada"/><path d="M1323.5,273 V961" stroke="#dadada"/><path d="M1403.5,273 V961" stroke="#dadada"/><path d="M1483.5,273 V961" stroke="#dadada"/><path d="M1563.5,273 V961" stroke="#dadada"/><path d="M1643.5,273 V961" stroke="#dadada"/><path d="M1723.5,273 V961" stroke="#dadada"/><path d="M1803.5,273 V961" stroke="#dadada"/><path d="M1883.5,273 V961" stroke="#dadada"/><path d="M33,297.5 H1894" stroke="#dadada"/><path d="M33,321.5 H1894" stroke="#dadada"/><path d="M33,345.5 H1894" stroke="#dadada"/><path d="M33,369.5 H1894" stroke="#dadada"/><path d="M33,393.5 H1894" stroke="#dadada"/><path d="M33,417.5 H1894" stroke="#dadada"/><path d="M33,441.5 H1894" stroke="#dadada"/><path d="M33,465.5 H1894" stroke="#dadada"/><path d="M33,489.5 H1894" stroke="#dadada"/><path d="M33,513.5 H1894" stroke="#dadada"/><path d="M33,537.5 H1894" stroke="#dadada"/><path d="M33,561.5 H1894" stroke="#dadada"/><path d="M33,585.5 H1894" stroke="#dadada"/><path d="M33,609.5 H1894" stroke="#dadada"/><path d="M33,633.5 H1894" stroke="#dadada"/><path d="M33,657.5 H1894" stroke="#dadada"/><path d="M33,681.5 H1894" stroke="#dadada"/><path d="M33,705.5 H1894" stroke="#dadada"/><path d="M33,729.5 H1894" stroke="#dadada"/><path d="M33,753.5 H1894" stroke="#dadada"/><path d="M33,777.5 H1894" stroke="#dadada"/><path d="M33,801.5 H1894" stroke="#dadada"/><path d="M33,825.5 H1894" stroke="#dadada"/><path d="M33,849.5 H1894" stroke="#dadada"/><path d="M33,873.5 H1894" stroke="#dadada"/><path d="M33,897.5 H1894" stroke="#dadada"/><path d="M33,921.5 H1894" stroke="#dadada"/><path d="M33,945.5 H1894" stroke="#dadada"/><path d="M33,969.5 H1894" stroke="#dadada"/></svg>
<svg style="position:absolute;left:0px;top:0px;" width="1920" height="1020" viewBox="0 0 1920 1020"><path d="M146.5,251 V273" stroke="#c2c2c2"/><path d="M283.5,251 V273" stroke="#c2c2c2"/><path d="M363.5,251 V273" stroke="#c2c2c2"/><path d="M443.5,251 V273" stroke="#c2c2c2"/><path d="M523.5,251 V273" stroke="#c2c2c2"/><path d="M603.5,251 V273" stroke="#c2c2c2"/><path d="M683.5,251 V273" stroke="#c2c2c2"/><path d="M763.5,251 V273" stroke="#c2c2c2"/><path d="M843.5,251 V273" stroke="#c2c2c2"/><path d="M923.5,251 V273" stroke="#c2c2c2"/><path d="M1003.5,251 V273" stroke="#c2c2c2"/><path d="M1083.5,251 V273" stroke="#c2c2c2"/><path d="M1163.5,251 V273" stroke="#c2c2c2"/><path d="M1243.5,251 V273" stroke="#c2c2c2"/><path d="M1323.5,251 V273" stroke="#c2c2c2"/><path d="M1403.5,251 V273" stroke="#c2c2c2"/><path d="M1483.5,251 V273" stroke="#c2c2c2"/><path d="M1563.5,251 V273" stroke="#c2c2c2"/><path d="M1643.5,251 V273" stroke="#c2c2c2"/><path d="M1723.5,251 V273" stroke="#c2c2c2"/><path d="M1803.5,251 V273" stroke="#c2c2c2"/><path d="M1883.5,251 V273" stroke="#c2c2c2"/><path d="M0,297.5 H33" stroke="#c2c2c2"/><path d="M0,321.5 H33" stroke="#c2c2c2"/><path d="M0,345.5 H33" stroke="#c2c2c2"/><path d="M0,369.5 H33" stroke="#c2c2c2"/><path d="M0,393.5 H33" stroke="#c2c2c2"/><path d="M0,417.5 H33" stroke="#c2c2c2"/><path d="M0,441.5 H33" stroke="#c2c2c2"/><path d="M0,465.5 H33" stroke="#c2c2c2"/><path d="M0,489.5 H33" stroke="#c2c2c2"/><path d="M0,513.5 H33" stroke="#c2c2c2"/><path d="M0,537.5 H33" stroke="#c2c2c2"/><path d="M0,561.5 H33" stroke="#c2c2c2"/><path d="M0,585.5 H33" stroke="#c2c2c2"/><path d="M0,609.5 H33" stroke="#c2c2c2"/><path d="M0,633.5 H33" stroke="#c2c2c2"/><path d="M0,657.5 H33" stroke="#c2c2c2"/><path d="M0,681.5 H33" stroke="#c2c2c2"/><path d="M0,705.5 H33" stroke="#c2c2c2"/><path d="M0,729.5 H33" stroke="#c2c2c2"/><path d="M0,753.5 H33" stroke="#c2c2c2"/><path d="M0,777.5 H33" stroke="#c2c2c2"/><path d="M0,801.5 H33" stroke="#c2c2c2"/><path d="M0,825.5 H33" stroke="#c2c2c2"/><path d="M0,849.5 H33" stroke="#c2c2c2"/><path d="M0,873.5 H33" stroke="#c2c2c2"/><path d="M0,897.5 H33" stroke="#c2c2c2"/><path d="M0,921.5 H33" stroke="#c2c2c2"/><path d="M0,945.5 H33" stroke="#c2c2c2"/><path d="M0,969.5 H33" stroke="#c2c2c2"/><path d="M0,273.5 H1894" stroke="#a8a8a8"/><path d="M33.5,251 V961" stroke="#a8a8a8"/><path d="M1894.5,273 V961" stroke="#a8a8a8"/><path d="M14,270 L30,254.5 V270 Z" fill="#bdbdbd"/></svg>
<div class="t" style="left:84.31px;top:253.31px;font-size:17px;color:#222222;">A</div>
<div class="t" style="left:209.35px;top:253.31px;font-size:17px;color:#222222;">B</div>
<div class="t" style="left:317.38px;top:253.31px;font-size:17px;color:#222222;">C</div>
<div class="t" style="left:397.38px;top:253.31px;font-size:17px;color:#222222;">D</div>
<div class="t" style="left:477.85px;top:253.31px;font-size:17px;color:#222222;">E</div>
<div class="t" style="left:558.32px;top:253.31px;font-size:17px;color:#222222;">F</div>
<div class="t" style="left:636.87px;top:253.31px;font-size:17px;color:#222222;">G</div>
<div class="t" style="left:717.38px;top:253.31px;font-size:17px;color:#222222;">H</div>
<div class="t" style="left:801.12px;top:253.31px;font-size:17px;color:#222222;">I</div>
<div class="t" style="left:879.25px;top:253.31px;font-size:17px;color:#222222;">J</div>
<div class="t" style="left:957.85px;top:253.31px;font-size:17px;color:#222222;">K</div>
<div class="t" style="left:1038.78px;top:253.31px;font-size:17px;color:#222222;">L</div>
<div class="t" style="left:1116.40px;top:253.31px;font-size:17px;color:#222222;">M</div>
<div class="t" style="left:1197.38px;top:253.31px;font-size:17px;color:#222222;">N</div>
<div class="t" style="left:1276.87px;top:253.31px;font-size:17px;color:#222222;">O</div>
<div class="t" style="left:1357.85px;top:253.31px;font-size:17px;color:#222222;">P</div>
<div class="t" style="left:1436.87px;top:253.31px;font-size:17px;color:#222222;">Q</div>
<div class="t" style="left:1517.38px;top:253.31px;font-size:17px;color:#222222;">R</div>
<div class="t" style="left:1597.85px;top:253.31px;font-size:17px;color:#222222;">S</div>
<div class="t" style="left:1678.32px;top:253.31px;font-size:17px;color:#222222;">T</div>
<div class="t" style="left:1757.38px;top:253.31px;font-size:17px;color:#222222;">U</div>
<div class="t" style="left:1837.85px;top:253.31px;font-size:17px;color:#222222;">V</div>
<div class="t" style="left:12.06px;top:278.76px;font-size:16px;color:#222222;">1</div>
<div class="t" style="left:12.06px;top:302.76px;font-size:16px;color:#222222;">2</div>
<div class="t" style="left:12.06px;top:326.76px;font-size:16px;color:#222222;">3</div>
<div class="t" style="left:12.06px;top:350.76px;font-size:16px;color:#222222;">4</div>
<div class="t" style="left:12.06px;top:374.76px;font-size:16px;color:#222222;">5</div>
<div class="t" style="left:12.06px;top:398.76px;font-size:16px;color:#222222;">6</div>
<div class="t" style="left:12.06px;top:422.76px;font-size:16px;color:#222222;">7</div>
<div class="t" style="left:12.06px;top:446.76px;font-size:16px;color:#222222;">8</div>
<div class="t" style="left:12.06px;top:470.76px;font-size:16px;color:#222222;">9</div>
<div class="t" style="left:7.62px;top:494.76px;font-size:16px;color:#222222;">10</div>
<div class="t" style="left:8.18px;top:518.76px;font-size:16px;color:#222222;">11</div>
<div class="t" style="left:7.62px;top:542.76px;font-size:16px;color:#222222;">12</div>
<div class="t" style="left:7.62px;top:566.76px;font-size:16px;color:#222222;">13</div>
<div class="t" style="left:7.62px;top:590.76px;font-size:16px;color:#222222;">14</div>
<div class="t" style="left:7.62px;top:614.76px;font-size:16px;color:#222222;">15</div>
<div class="t" style="left:7.62px;top:638.76px;font-size:16px;color:#222222;">16</div>
<div class="t" style="left:7.62px;top:662.76px;font-size:16px;color:#222222;">17</div>
<div class="t" style="left:7.62px;top:686.76px;font-size:16px;color:#222222;">18</div>
<div class="t" style="left:7.62px;top:710.76px;font-size:16px;color:#222222;">19</div>
<div class="t" style="left:7.62px;top:734.76px;font-size:16px;color:#222222;">20</div>
<div class="t" style="left:7.62px;top:758.76px;font-size:16px;color:#222222;">21</div>
<div class="t" style="left:7.62px;top:782.76px;font-size:16px;color:#222222;">22</div>
<div class="t" style="left:7.62px;top:806.76px;font-size:16px;color:#222222;">23</div>
<div class="t" style="left:7.62px;top:830.76px;font-size:16px;color:#222222;">24</div>
<div class="t" style="left:7.62px;top:854.76px;font-size:16px;color:#222222;">25</div>
<div class="t" style="left:7.62px;top:878.76px;font-size:16px;color:#222222;">26</div>
<div class="t" style="left:7.62px;top:902.76px;font-size:16px;color:#222222;">27</div>
<div class="t" style="left:7.62px;top:926.76px;font-size:16px;color:#222222;">28</div>
<div class="t" style="left:7.62px;top:950.76px;font-size:16px;color:#222222;">29</div>
<div style="position:absolute;left:34px;top:274px;width:250px;height:47px;background:#d9e1f2"></div>
<div style="position:absolute;left:34px;top:321px;width:250px;height:1px;background:#8ea9db"></div>
<div style="position:absolute;left:34px;top:345px;width:250px;height:24px;background:#d9e1f2"></div>
<div style="position:absolute;left:34px;top:369px;width:250px;height:1px;background:#8ea9db"></div>
<div style="position:absolute;left:34px;top:370px;width:249px;height:71px;background:#fff"></div>
<div style="position:absolute;left:34px;top:393px;width:250px;height:1px;background:#8ea9db"></div>
<div style="position:absolute;left:34px;top:441px;width:250px;height:1px;background:#8ea9db"></div>
<div style="position:absolute;left:34px;top:442px;width:250px;height:24px;background:#d9e1f2"></div>
<div style="position:absolute;left:262px;top:275px;width:21px;height:21px;box-sizing:border-box;border:1px solid #a0a0a0;background:linear-gradient(#fdfdfd,#eceef3)"></div>
<svg style="position:absolute;left:268px;top:284px;" width="10" height="5" viewBox="0 0 10 5"><path d="M0,0 H8 L4,4 Z" fill="#666"/></svg>
<div style="position:absolute;left:262px;top:299px;width:21px;height:21px;box-sizing:border-box;border:1px solid #a0a0a0;background:linear-gradient(#fdfdfd,#eceef3)"></div>
<svg style="position:absolute;left:268px;top:308px;" width="10" height="5" viewBox="0 0 10 5"><path d="M0,0 H8 L4,4 Z" fill="#666"/></svg>
<div class="t" style="left:37.20px;top:278.76px;font-size:16px;color:#000;">Sales Month</div>
<div class="t" style="left:150.40px;top:278.76px;font-size:16px;color:#000;transform:scaleX(0.9586);">(All)</div>
<div class="t" style="left:37.20px;top:302.76px;font-size:16px;color:#000;transform:scaleX(1.0108);">Products</div>
<div class="t" style="left:150.40px;top:302.76px;font-size:16px;color:#000;transform:scaleX(0.9586);">(All)</div>
<div class="t" style="left:37.00px;top:350.76px;font-size:16px;color:#000;font-weight:bold;transform:scaleX(0.9316);">Row Labels</div>
<div style="position:absolute;left:125px;top:347px;width:21px;height:21px;box-sizing:border-box;border:1px solid #a8a8a8;background:linear-gradient(#fdfdfd,#eceef2)"></div>
<svg style="position:absolute;left:126px;top:348px;" width="20" height="20" viewBox="0 0 20 20"><path d="M5.2,4 H16 L12.8,8 V12.6 H10 V8 Z" fill="#5f5f5f"/><path d="M3,11 H7.8 L5.4,14 Z" fill="#5f5f5f"/></svg>
<div class="t" style="left:150.40px;top:350.76px;font-size:16px;color:#000;font-weight:bold;transform:scaleX(0.9654);">Sum of Net Sales</div>
<svg style="position:absolute;left:40px;top:375px;" width="13" height="13" viewBox="0 0 13 13"><rect x="1.5" y="1.5" width="10" height="10" fill="#fff" stroke="#8ea9db"/><path d="M4,6.5 h5" stroke="#444"/></svg>
<div class="t" style="left:55.60px;top:374.76px;font-size:16px;color:#000;font-weight:bold;transform:scaleX(0.9967);">North</div>
<div class="t" style="left:216.78px;top:374.76px;font-size:16px;color:#000;font-weight:bold;">1005751</div>
<div class="t" style="left:73.40px;top:398.76px;font-size:16px;color:#000;transform:scaleX(0.9803);">2015</div>
<div class="t" style="left:226.86px;top:398.76px;font-size:16px;color:#000;">112847</div>
<div class="t" style="left:73.40px;top:422.76px;font-size:16px;color:#000;transform:scaleX(0.9803);">2016</div>
<div class="t" style="left:225.74px;top:422.76px;font-size:16px;color:#000;">892904</div>
<div class="t" style="left:37.00px;top:446.76px;font-size:16px;color:#000;font-weight:bold;transform:scaleX(0.9880);">Grand Total</div>
<div class="t" style="left:216.78px;top:446.76px;font-size:16px;color:#000;font-weight:bold;">1005751</div>
<div style="position:absolute;left:613px;top:340px;width:695px;height:433px;box-sizing:border-box;border:1px solid #d9d9d9;background:#fff"></div>
<div style="position:absolute;left:620px;top:350px;width:99px;height:22px;background:linear-gradient(#e2e2e2,#c4c4c4);"></div>
<div style="position:absolute;left:720px;top:350px;width:77px;height:22px;background:linear-gradient(#e2e2e2,#c4c4c4);"></div>
<div class="t" style="left:624.60px;top:355.00px;font-size:13px;color:#000;transform:scaleX(0.9532);">Sales Month</div>
<svg style="position:absolute;left:703px;top:358px;" width="11" height="7" viewBox="0 0 11 7"><path d="M0.5,0.5 H9.5 L5,5.5 Z" fill="#333"/></svg>
<div class="t" style="left:724.00px;top:355.00px;font-size:13px;color:#000;transform:scaleX(0.9652);">Products</div>
<svg style="position:absolute;left:780px;top:358px;" width="11" height="7" viewBox="0 0 11 7"><path d="M0.5,0.5 H9.5 L5,5.5 Z" fill="#333"/></svg>
<div style="position:absolute;left:626px;top:382px;width:111px;height:22px;background:linear-gradient(#e2e2e2,#c4c4c4);"></div>
<div class="t" style="left:630.00px;top:387.00px;font-size:13px;color:#000;transform:scaleX(1.0036);">Sum of Net Sales</div>
<div class="t" style="left:937.50px;top:421.60px;font-size:21.5px;color:#595959;transform:scaleX(0.9721);">Total</div>
<svg style="position:absolute;left:0px;top:0px;" width="1920" height="1020" viewBox="0 0 1920 1020"><path d="M690,671.5 H1218.5" stroke="#d9d9d9"/><path d="M690,651.5 H1218.5" stroke="#d9d9d9"/><path d="M690,630.5 H1218.5" stroke="#d9d9d9"/><path d="M690,610.5 H1218.5" stroke="#d9d9d9"/><path d="M690,589.5 H1218.5" stroke="#d9d9d9"/><path d="M690,569.5 H1218.5" stroke="#d9d9d9"/><path d="M690,548.5 H1218.5" stroke="#d9d9d9"/><path d="M690,527.5 H1218.5" stroke="#d9d9d9"/><path d="M690,507.5 H1218.5" stroke="#d9d9d9"/><path d="M690,486.5 H1218.5" stroke="#d9d9d9"/><path d="M690,466.5 H1218.5" stroke="#d9d9d9"/><path d="M690.5,672 V730 M1218.5,672 V730" stroke="#d9d9d9"/><rect x="782" y="649" width="82" height="23" fill="#4472c4"/><rect x="1045" y="489" width="83" height="183" fill="#4472c4"/><rect x="1245" y="590" width="8" height="9" fill="#4472c4"/></svg>
<div class="t" style="left:669.42px;top:665.80px;font-size:13px;color:#595959;transform:scaleX(1.0500);">0</div>
<div class="t" style="left:631.48px;top:645.26px;font-size:13px;color:#595959;transform:scaleX(1.0500);">100000</div>
<div class="t" style="left:631.48px;top:624.72px;font-size:13px;color:#595959;transform:scaleX(1.0500);">200000</div>
<div class="t" style="left:631.48px;top:604.18px;font-size:13px;color:#595959;transform:scaleX(1.0500);">300000</div>
<div class="t" style="left:631.48px;top:583.64px;font-size:13px;color:#595959;transform:scaleX(1.0500);">400000</div>
<div class="t" style="left:631.48px;top:563.10px;font-size:13px;color:#595959;transform:scaleX(1.0500);">500000</div>
<div class="t" style="left:631.48px;top:542.56px;font-size:13px;color:#595959;transform:scaleX(1.0500);">600000</div>
<div class="t" style="left:631.48px;top:522.02px;font-size:13px;color:#595959;transform:scaleX(1.0500);">700000</div>
<div class="t" style="left:631.48px;top:501.48px;font-size:13px;color:#595959;transform:scaleX(1.0500);">800000</div>
<div class="t" style="left:631.48px;top:480.94px;font-size:13px;color:#595959;transform:scaleX(1.0500);">900000</div>
<div class="t" style="left:623.83px;top:460.40px;font-size:13px;color:#595959;transform:scaleX(1.0500);">1000000</div>
<div class="t" style="left:808.54px;top:685.00px;font-size:13px;color:#595959;">2015</div>
<div class="t" style="left:1072.54px;top:685.00px;font-size:13px;color:#595959;">2016</div>
<div class="t" style="left:938.61px;top:713.70px;font-size:13px;color:#595959;">North</div>
<div class="t" style="left:1257.00px;top:588.40px;font-size:13px;color:#595959;transform:scaleX(1.0937);">Total</div>
<div style="position:absolute;left:626px;top:739px;width:69px;height:22px;background:linear-gradient(#e2e2e2,#c4c4c4);"></div>
<div style="position:absolute;left:696px;top:739px;width:109px;height:22px;background:linear-gradient(#e2e2e2,#c4c4c4);"></div>
<div class="t" style="left:630.00px;top:744.00px;font-size:13px;color:#000;transform:scaleX(0.9109);">Zone</div>
<svg style="position:absolute;left:666px;top:742px;" width="26" height="18" viewBox="0 0 26 18"><path d="M2,10 H9 L5.5,14 Z" fill="#333"/><path d="M8.7,1.2 H23 L18,7.5 V15.5 H14 V7.5 Z" fill="#777" stroke="#777" stroke-width="0.8" stroke-linejoin="round"/></svg>
<div class="t" style="left:700.00px;top:744.00px;font-size:13px;color:#000;transform:scaleX(0.9669);">Financial Year</div>
<svg style="position:absolute;left:788px;top:747px;" width="11" height="7" viewBox="0 0 11 7"><path d="M0.5,0.5 H9.5 L5,5.5 Z" fill="#333"/></svg>
<div style="position:absolute;left:1254px;top:739px;width:19px;height:22px;background:linear-gradient(#e2e2e2,#c4c4c4);"></div>
<div style="position:absolute;left:1274px;top:739px;width:19px;height:22px;background:linear-gradient(#e2e2e2,#c4c4c4);"></div>
<svg style="position:absolute;left:1254px;top:739px;" width="40" height="22" viewBox="0 0 40 22"><path d="M9.5,6 V16 M4.5,11 H14.5" stroke="#555" stroke-width="2"/><path d="M24,11 H34" stroke="#555" stroke-width="2"/></svg>
<div style="position:absolute;left:1359px;top:347px;width:242px;height:325px;background:#fff"></div>
<div style="position:absolute;left:1359px;top:347px;width:240px;height:1px;background:#4472c4"></div>
<div style="position:absolute;left:1359px;top:347px;width:1px;height:324px;background:#4472c4"></div>
<div style="position:absolute;left:1598px;top:347px;width:1px;height:324px;background:#4472c4"></div>
<div style="position:absolute;left:1359px;top:670px;width:240px;height:1px;background:#4472c4"></div>
<div style="position:absolute;left:1360px;top:348px;width:241px;height:1px;background:#5a5a5a"></div>
<div style="position:absolute;left:1360px;top:348px;width:1px;height:324px;background:#5a5a5a"></div>
<div style="position:absolute;left:1600px;top:348px;width:1px;height:324px;background:#5a5a5a"></div>
<div style="position:absolute;left:1360px;top:671px;width:241px;height:1px;background:#5a5a5a"></div>
<div class="t" style="left:1370.30px;top:356.60px;font-size:15px;color:#000;font-weight:bold;transform:scaleX(1.0377);">Zone</div>
<div style="position:absolute;left:1370px;top:380px;width:218px;height:1px;background:#4472c4"></div>
<svg style="position:absolute;left:1524px;top:352px;" width="22" height="22" viewBox="0 0 22 22"><path d="M2.5,5.5 L4.5,7.8 L8.5,3 M2.5,11.5 L4.5,13.8 L8.5,9 M2.5,17.5 L4.5,19.8 L8.5,15" fill="none" stroke="#6b6b6b" stroke-width="1.2"/><path d="M10,4.5 H20 M10,10.5 H20 M10,16.5 H20" stroke="#6b6b6b" stroke-width="1.2"/></svg>
<svg style="position:absolute;left:1563px;top:352px;" width="24" height="24" viewBox="0 0 24 24"><path d="M2,2.2 H16 L11,8 V14.8 H8 V8 Z" fill="#6b6b6b"/><path d="M4.5,3.5 L9,8 V13.5" fill="none" stroke="#fff" stroke-width="0.9"/><path d="M11,12 L20,20.5 M20,12.5 L11,20.5" stroke="#d24726" stroke-width="2"/></svg>
<div style="position:absolute;left:1370px;top:386px;width:218px;height:31px;box-sizing:border-box;border:1px solid #d4d4d4;border-radius:3px;background:#fff"></div>
<div class="t" style="left:1381.80px;top:393.96px;font-size:16px;color:#000;">East</div>
<div style="position:absolute;left:1370px;top:421px;width:218px;height:31px;box-sizing:border-box;border:1px solid #9a9a9a;border-radius:3px;background:#b4c6e7"></div>
<div class="t" style="left:1381.80px;top:428.96px;font-size:16px;color:#000;">North</div>
<div style="position:absolute;left:1370px;top:456px;width:218px;height:31px;box-sizing:border-box;border:1px solid #d4d4d4;border-radius:3px;background:#fff"></div>
<div class="t" style="left:1381.80px;top:463.96px;font-size:16px;color:#000;">South</div>
<div style="position:absolute;left:1370px;top:491px;width:218px;height:31px;box-sizing:border-box;border:1px solid #d4d4d4;border-radius:3px;background:#fff"></div>
<div class="t" style="left:1381.80px;top:498.96px;font-size:16px;color:#000;">West</div>
<svg style="position:absolute;left:0px;top:0px;" width="1920" height="1020" viewBox="0 0 1920 1020"><circle cx="1361" cy="349.2" r="5.8" fill="#fff" stroke="#5a5a5a" stroke-width="2.5"/><circle cx="1481" cy="349.2" r="5.8" fill="#fff" stroke="#5a5a5a" stroke-width="2.5"/><circle cx="1601" cy="349.2" r="5.8" fill="#fff" stroke="#5a5a5a" stroke-width="2.5"/><circle cx="1361" cy="510" r="5.8" fill="#fff" stroke="#5a5a5a" stroke-width="2.5"/><circle cx="1601" cy="510" r="5.8" fill="#fff" stroke="#5a5a5a" stroke-width="2.5"/><circle cx="1361" cy="672" r="5.8" fill="#fff" stroke="#5a5a5a" stroke-width="2.5"/><circle cx="1481" cy="672" r="5.8" fill="#fff" stroke="#5a5a5a" stroke-width="2.5"/><circle cx="1601" cy="672" r="5.8" fill="#fff" stroke="#5a5a5a" stroke-width="2.5"/></svg>
<div style="position:absolute;left:0px;top:961px;width:1897px;height:32px;background:#e6e6e6"></div>
<div style="position:absolute;left:0px;top:961px;width:1897px;height:1px;background:#adadad"></div>
<div style="position:absolute;left:112px;top:961px;width:115px;height:28px;background:#fff"></div>
<div style="position:absolute;left:112px;top:988px;width:115px;height:2px;background:#217346"></div>
<div style="position:absolute;left:112px;top:961px;width:1px;height:28px;background:#c6c6c6"></div>
<div style="position:absolute;left:226px;top:961px;width:1px;height:28px;background:#c6c6c6"></div>
<div class="t" style="left:125.00px;top:967.46px;font-size:16px;color:#217346;font-weight:bold;transform:scaleX(1.0551);">Pivot Table</div>
<div class="t" style="left:240.00px;top:967.46px;font-size:16px;color:#444444;transform:scaleX(1.0366);">Source Data</div>
<div style="position:absolute;left:346px;top:966px;width:1px;height:23px;background:#b0b0b0"></div>
<svg style="position:absolute;left:383px;top:966px;" width="24" height="24" viewBox="0 0 24 24"><circle cx="12" cy="12" r="9.5" fill="none" stroke="#777" stroke-width="1.3"/><path d="M12,7 V17 M7,12 H17" stroke="#777" stroke-width="1.5"/></svg>
<svg style="position:absolute;left:26px;top:970px;" width="48" height="14" viewBox="0 0 48 14"><path d="M9,3 L4,7.5 L9,12 Z" fill="#c0c0c0"/><path d="M36,3 L41,7.5 L36,12 Z" fill="#c0c0c0"/></svg>
<div style="position:absolute;left:1150px;top:971px;width:3px;height:3px;background:#bdbdbd"></div>
<div style="position:absolute;left:1150px;top:976px;width:3px;height:3px;background:#bdbdbd"></div>
<div style="position:absolute;left:1150px;top:981px;width:3px;height:3px;background:#bdbdbd"></div>
<div style="position:absolute;left:1170px;top:968px;width:19px;height:19px;box-sizing:border-box;border:1px solid #9a9a9a;background:#fff"></div>
<svg style="position:absolute;left:1170px;top:968px;" width="19" height="19" viewBox="0 0 19 19"><path d="M12,5 L7,9.5 L12,14 Z" fill="#222"/></svg>
<div style="position:absolute;left:1189px;top:968px;width:687px;height:19px;background:#f0f0f0"></div>
<div style="position:absolute;left:1189px;top:968px;width:655px;height:19px;box-sizing:border-box;border:1px solid #9a9a9a;background:#fff"></div>
<div style="position:absolute;left:1876px;top:968px;width:19px;height:19px;box-sizing:border-box;border:1px solid #9a9a9a;background:#fff"></div>
<svg style="position:absolute;left:1876px;top:968px;" width="19" height="19" viewBox="0 0 19 19"><path d="M7,5 L12,9.5 L7,14 Z" fill="#222"/></svg>
<div style="position:absolute;left:1897px;top:250px;width:23px;height:743px;background:#e6e6e6"></div>
<div style="position:absolute;left:1898px;top:252px;width:19px;height:19px;box-sizing:border-box;border:1px solid #9a9a9a;background:#fff"></div>
<svg style="position:absolute;left:1898px;top:252px;" width="19" height="19" viewBox="0 0 19 19"><path d="M4.5,12 L9.5,7 L14.5,12 Z" fill="#222"/></svg>
<div style="position:absolute;left:1898px;top:271px;width:19px;height:672px;background:#f0f0f0"></div>
<div style="position:absolute;left:1898px;top:272px;width:19px;height:647px;box-sizing:border-box;border:1px solid #9a9a9a;background:#fff"></div>
<div style="position:absolute;left:1898px;top:943px;width:19px;height:19px;box-sizing:border-box;border:1px solid #9a9a9a;background:#fff"></div>
<svg style="position:absolute;left:1898px;top:943px;" width="19" height="19" viewBox="0 0 19 19"><path d="M4.5,7 L9.5,12 L14.5,7 Z" fill="#222"/></svg>
<div style="position:absolute;left:0px;top:993px;width:1920px;height:27px;background:#f3f3f3"></div>
<div style="position:absolute;left:0px;top:993px;width:1920px;height:1px;background:#cfcfcf"></div>
<div class="t" style="left:14.40px;top:999.55px;font-size:14px;color:#262626;transform:scaleX(0.8725);">Ready</div>
<div style="position:absolute;left:1547px;top:993px;width:50px;height:27px;background:#d4d4d4"></div>
<svg style="position:absolute;left:1563px;top:999px;" width="18" height="16" viewBox="0 0 18 16"><rect x="1.5" y="1.5" width="15" height="13" fill="none" stroke="#666"/><path d="M1.5,6 H16.5 M1.5,10.5 H16.5 M6.5,1.5 V14.5 M11.5,1.5 V14.5" stroke="#666"/></svg>
<div style="position:absolute;left:1828px;top:1007px;width:17px;height:1px;background:#444"></div>
<svg style="position:absolute;left:1849px;top:999px;" width="14" height="14" viewBox="0 0 14 14"><path d="M7,2 V12 M2,7 H12" stroke="#444" stroke-width="1.3"/></svg>
<div class="t" style="left:1877.50px;top:1000.00px;font-size:13px;color:#444444;transform:scaleX(0.9165);">100%</div>
<div style="position:absolute;left:1602px;top:440px;width:228px;height:577px;border-radius:5px;box-shadow:2px 2px 8px rgba(0,0,0,0.07);"></div>
<div style="position:absolute;left:1600px;top:438px;width:229px;height:578px;box-sizing:border-box;border:1px solid #9b9b9b;border-radius:5px;background:#fff"></div>
<div style="position:absolute;left:1631px;top:500px;width:196px;height:30px;background:#e9e9e9"></div>
<div style="position:absolute;left:1602px;top:954px;width:225px;height:30px;background:#d1d1d1"></div>
<div style="position:absolute;left:1642px;top:567px;width:185px;height:1px;background:#e3e3e3"></div>
<div style="position:absolute;left:1642px;top:600px;width:185px;height:1px;background:#e3e3e3"></div>
<div style="position:absolute;left:1642px;top:663px;width:185px;height:1px;background:#e3e3e3"></div>
<div style="position:absolute;left:1642px;top:696px;width:185px;height:1px;background:#e3e3e3"></div>
<div style="position:absolute;left:1642px;top:729px;width:185px;height:1px;background:#e3e3e3"></div>
<div style="position:absolute;left:1642px;top:762px;width:185px;height:1px;background:#e3e3e3"></div>
<div style="position:absolute;left:1642px;top:795px;width:185px;height:1px;background:#e3e3e3"></div>
<div style="position:absolute;left:1642px;top:888px;width:185px;height:1px;background:#e3e3e3"></div>
<div style="position:absolute;left:1642px;top:921px;width:185px;height:1px;background:#e3e3e3"></div>
<div class="t" style="left:1641.50px;top:448.10px;font-size:15px;color:#262626;transform:scaleX(0.9218);">Cut</div>
<div style="position:absolute;left:1659px;top:463px;width:4px;height:1px;background:#262626"></div>
<div class="t" style="left:1641.50px;top:478.00px;font-size:15px;color:#262626;transform:scaleX(0.9650);">Copy</div>
<div style="position:absolute;left:1642px;top:493px;width:10px;height:1px;background:#262626"></div>
<div class="t" style="left:1641.50px;top:578.20px;font-size:15px;color:#262626;transform:scaleX(0.9238);">Refresh</div>
<div style="position:absolute;left:1642px;top:593px;width:10px;height:1px;background:#262626"></div>
<div class="t" style="left:1641.50px;top:611.10px;font-size:15px;color:#262626;transform:scaleX(1.0150);">Sort A to Z</div>
<div style="position:absolute;left:1642px;top:626px;width:10px;height:1px;background:#262626"></div>
<div class="t" style="left:1641.50px;top:641.30px;font-size:15px;color:#262626;transform:scaleX(1.0032);">Sort Z to A</div>
<div style="position:absolute;left:1691px;top:656px;width:8px;height:1px;background:#262626"></div>
<div class="t" style="left:1641.50px;top:673.50px;font-size:15px;color:#262626;transform:scaleX(0.9960);">Clear Filter from "Zone"</div>
<div style="position:absolute;left:1664px;top:688px;width:8px;height:1px;background:#262626"></div>
<div class="t" style="left:1641.50px;top:706.90px;font-size:15px;color:#262626;transform:scaleX(1.0114);">Multi-Select "Zone"</div>
<div style="position:absolute;left:1642px;top:722px;width:13px;height:1px;background:#262626"></div>
<div class="t" style="left:1641.50px;top:739.90px;font-size:15px;color:#262626;transform:scaleX(0.9528);">Report Connections...</div>
<div style="position:absolute;left:1745px;top:755px;width:8px;height:1px;background:#262626"></div>
<div class="t" style="left:1641.50px;top:772.80px;font-size:15px;color:#262626;transform:scaleX(0.9814);">Remove "Zone"</div>
<div style="position:absolute;left:1681px;top:788px;width:7px;height:1px;background:#262626"></div>
<div class="t" style="left:1641.50px;top:835.60px;font-size:15px;color:#262626;transform:scaleX(0.9956);">Bring to Front</div>
<div style="position:absolute;left:1706px;top:850px;width:5px;height:1px;background:#262626"></div>
<div class="t" style="left:1641.50px;top:866.30px;font-size:15px;color:#262626;transform:scaleX(0.9639);">Send to Back</div>
<div style="position:absolute;left:1720px;top:881px;width:7px;height:1px;background:#262626"></div>
<div class="t" style="left:1641.50px;top:899.30px;font-size:15px;color:#262626;transform:scaleX(0.9386);">Assign Macro...</div>
<div style="position:absolute;left:1676px;top:914px;width:8px;height:1px;background:#262626"></div>
<div class="t" style="left:1641.50px;top:931.70px;font-size:15px;color:#262626;transform:scaleX(0.9796);">View Alt Text...</div>
<div style="position:absolute;left:1677px;top:946px;width:10px;height:1px;background:#262626"></div>
<div class="t" style="left:1641.50px;top:962.00px;font-size:15px;color:#262626;transform:scaleX(0.9435);">Size and Properties...</div>
<div style="position:absolute;left:1654px;top:977px;width:7px;height:1px;background:#262626"></div>
<div class="t" style="left:1641.50px;top:991.90px;font-size:15px;color:#262626;transform:scaleX(0.9366);">Slicer Settings...</div>
<div style="position:absolute;left:1690px;top:1007px;width:8px;height:1px;background:#262626"></div>
<div class="t" style="left:1642.40px;top:506.80px;font-size:15px;color:#666666;font-weight:bold;transform:scaleX(0.9506);">Paste Options:</div>
<div class="t" style="left:1641.50px;top:805.80px;font-size:15px;color:#b0b0b0;transform:scaleX(0.9520);">Group</div>
<div style="position:absolute;left:1641px;top:821px;width:12px;height:1px;background:#b0b0b0"></div>
<svg style="position:absolute;left:1808px;top:807px;" width="8" height="12" viewBox="0 0 8 12"><path d="M1,1 L6,6 L1,11 Z" fill="#b0b0b0"/></svg>
<svg style="position:absolute;left:1808px;top:837px;" width="8" height="12" viewBox="0 0 8 12"><path d="M1,1 L6,6 L1,11 Z" fill="#111"/></svg>
<svg style="position:absolute;left:1808px;top:867px;" width="8" height="12" viewBox="0 0 8 12"><path d="M1,1 L6,6 L1,11 Z" fill="#111"/></svg>
<div style="position:absolute;left:1798px;top:834px;width:1px;height:18px;background:#e0e0e0"></div>
<div style="position:absolute;left:1798px;top:864px;width:1px;height:18px;background:#e0e0e0"></div>
<svg style="position:absolute;left:0px;top:0px;" width="1920" height="1020" viewBox="0 0 1920 1020"><path d="M1610,445 L1618.5,457 M1620,445 L1611.5,457" stroke="#6b6b6b" stroke-width="1.6"/><circle cx="1610.5" cy="459.5" r="3" fill="none" stroke="#3d78c5" stroke-width="1.3"/><circle cx="1619.5" cy="459.5" r="3" fill="none" stroke="#3d78c5" stroke-width="1.3"/><path d="M1607.5,475.5 H1613.5 L1616.5,478.5 V487.5 H1607.5 Z" fill="#fff" stroke="#6b6b6b"/><path d="M1613.5,475.5 V478.5 H1616.5" fill="none" stroke="#6b6b6b"/><path d="M1609,478.5 h4 M1609,481.5 h4 M1609,484.5 h4" stroke="#3d78c5"/><path d="M1614.5,480.5 H1620.5 L1623.5,483.5 V492.5 H1614.5 Z" fill="#fff" stroke="#6b6b6b"/><path d="M1620.5,480.5 V483.5 H1623.5" fill="none" stroke="#6b6b6b"/><path d="M1616,483.5 h3 M1616,486.5 h6 M1616,489.5 h6" stroke="#3d78c5"/><rect x="1607" y="505" width="16" height="19" rx="1" fill="#e8bd72"/><rect x="1611" y="503" width="8" height="4" rx="1" fill="#fff" stroke="#6b6b6b"/><path d="M1616.5,512.5 H1623 L1626.5,516 V523.5 H1616.5 Z" fill="#fff" stroke="#6b6b6b"/><rect x="1642" y="540" width="16" height="19" rx="1" fill="#e8bd72"/><rect x="1646" y="538" width="8" height="4" rx="1" fill="#fff" stroke="#6b6b6b"/><path d="M1651.5,547.5 H1658 L1661.5,551 V558.5 H1651.5 Z" fill="#fff" stroke="#6b6b6b"/><path d="M1613,592.5 H1608.5 V575.5 H1618.5 L1622.5,579.5 V581" fill="none" stroke="#6b6b6b"/><path d="M1618.5,575.5 V579.5 H1622.5" fill="none" stroke="#6b6b6b" stroke-width="0.8"/><path d="M1614.8,584.5 A5,5 0 0 1 1623.5,583 M1624.2,587.5 A5,5 0 0 1 1615.5,589" fill="none" stroke="#5ba08a" stroke-width="2"/><path d="M1621,580 L1625,584.2 L1620.3,584.8 Z M1618,592 L1614,587.8 L1618.7,587.2 Z" fill="#5ba08a"/><rect x="1604.5" y="605.5" width="24" height="24" fill="#f8f8f8" stroke="#444" stroke-width="1.3"/></svg>
<div class="t" style="left:1608.3px;top:607px;font-size:12px;color:#3d78c5;line-height:1;-webkit-text-stroke:0.3px #3d78c5">A</div>
<div class="t" style="left:1608.8px;top:617px;font-size:11px;color:#8d55c9;line-height:1;-webkit-text-stroke:0.3px #8d55c9">Z</div>
<div class="t" style="left:1608.8px;top:637px;font-size:11px;color:#8d55c9;line-height:1;-webkit-text-stroke:0.3px #8d55c9">Z</div>
<div class="t" style="left:1608.3px;top:647px;font-size:12px;color:#3d78c5;line-height:1;-webkit-text-stroke:0.3px #3d78c5">A</div>
<svg style="position:absolute;left:0px;top:0px;" width="1920" height="1020" viewBox="0 0 1920 1020"><path d="M1621.5,608 V627 M1618,623 L1621.5,627 L1625,623" fill="none" stroke="#6b6b6b" stroke-width="1.1"/><path d="M1621.5,638 V657 M1618,653 L1621.5,657 L1625,653" fill="none" stroke="#6b6b6b" stroke-width="1.1"/><path d="M1607,671 H1621 L1615.5,677 V684 H1612.5 V677 Z" fill="#6b6b6b"/><path d="M1612.5,677 V684 H1615.5" fill="none" stroke="#fff" stroke-width="0.8"/><path d="M1616.5,682 L1625,690.5 M1625,682 L1616,690.5" stroke="#d24726" stroke-width="2"/><path d="M1607,708 L1609,710 L1612,705.5 M1607,714 L1609,716 L1612,711.5 M1607,720 L1609,722 L1612,717.5" fill="none" stroke="#6b6b6b" stroke-width="1.1"/><path d="M1613,706.5 H1625 M1613,712.5 H1625 M1613,718.5 H1625" stroke="#6b6b6b" stroke-width="1.2"/><rect x="1606.5" y="737.5" width="14" height="12" fill="#fff" stroke="#6b6b6b"/><rect x="1606" y="737" width="15" height="2" fill="#6b6b6b"/><path d="M1608,742 h6 M1608,745 h4" stroke="#3d78c5"/><rect x="1613.5" y="742.5" width="12" height="13" fill="#fff" stroke="#6b6b6b"/><path d="M1615,745 h9" stroke="#bbb" stroke-width="1.5"/><path d="M1617,752 C1616,748 1619,746 1622,747 M1620.5,745.5 L1622.5,747 L1621,749" fill="none" stroke="#3d78c5" stroke-width="1.1"/><path d="M1607,751 C1608,755 1611,755 1614,754.5 M1612,752.5 L1614.5,754.5 L1612,756.5" fill="none" stroke="#5ba07f" stroke-width="1.4"/><path d="M1607,771 L1624.5,789 M1624.5,771 L1607,789" stroke="#555" stroke-width="2.3"/><rect x="1609.5" y="805.5" width="10" height="9" fill="#f3f0f3" stroke="#c4c4c4"/><rect x="1612.5" y="808.5" width="10" height="10" fill="none" stroke="#c4c4c4"/><rect x="1607" y="803" width="3" height="3" fill="#c4c4c4"/><rect x="1622" y="803" width="3" height="3" fill="#c4c4c4"/><rect x="1607" y="819" width="3" height="3" fill="#c4c4c4"/><rect x="1622" y="819" width="3" height="3" fill="#c4c4c4"/><path d="M1608.5,839 V834.5 H1612" fill="none" stroke="#6b6b6b"/><path d="M1622.5,848 V852.5 H1619" fill="none" stroke="#6b6b6b"/><rect x="1610" y="837" width="10" height="11" fill="#e8bd72"/><rect x="1606.5" y="862.5" width="7" height="7" fill="#fff" stroke="#6b6b6b"/><rect x="1609" y="865" width="12" height="12" fill="#e8bd72"/><rect x="1617.5" y="872.5" width="7" height="8" fill="#fff" stroke="#6b6b6b"/><rect x="1607.5" y="929.5" width="17" height="17" fill="#fff" stroke="#6b6b6b"/><circle cx="1619" cy="933.5" r="1.7" fill="#e8bd72"/><path d="M1608,946 L1613,938 L1617,943 L1619,941 L1623,946 Z" fill="#3d78c5"/><rect x="1613.5" y="944.5" width="12" height="5" fill="#fff" stroke="#6b6b6b"/><path d="M1610,958.5 L1607.5,961 M1610,958.5 L1612.5,961 M1610,958.5 V963 M1610,977 L1607.5,974.5 M1610,977 L1612.5,974.5 M1610,977 V972" stroke="#3d78c5" stroke-width="1.4" fill="none"/><rect x="1607.5" y="964.5" width="4.5" height="4.5" fill="#fff" stroke="#6b6b6b" stroke-width="0.9"/><path d="M1612,958.5 h7 M1612,977 h7" stroke="#6b6b6b" stroke-width="0.8" stroke-dasharray="1,1"/><rect x="1619.5" y="958.5" width="5.5" height="18" fill="#fff" stroke="#6b6b6b"/><rect x="1608.5" y="989.5" width="15" height="17" fill="#fff" stroke="#6b6b6b"/><rect x="1608" y="989" width="16" height="2.5" fill="#3d78c5"/><circle cx="1612" cy="995.5" r="1" fill="none" stroke="#6b6b6b" stroke-width="0.8"/><circle cx="1612" cy="999.5" r="1" fill="none" stroke="#6b6b6b" stroke-width="0.8"/><circle cx="1612" cy="1003.5" r="1" fill="none" stroke="#6b6b6b" stroke-width="0.8"/><path d="M1614.5,995.5 h7 M1614.5,999.5 h7 M1614.5,1003.5 h7" stroke="#6b6b6b"/></svg>
<svg style="position:absolute;left:0px;top:0px;" width="1920" height="1020" viewBox="0 0 1920 1020"><path d="M1437.5,909 L1582,966" stroke="#e31f25" stroke-width="5" stroke-linecap="butt"/><path d="M1601,972.6 L1573.6,975.6 L1583,953.3 Z" fill="#e31f25" stroke="#e31f25" stroke-width="1" stroke-linejoin="round"/></svg></body></html>
